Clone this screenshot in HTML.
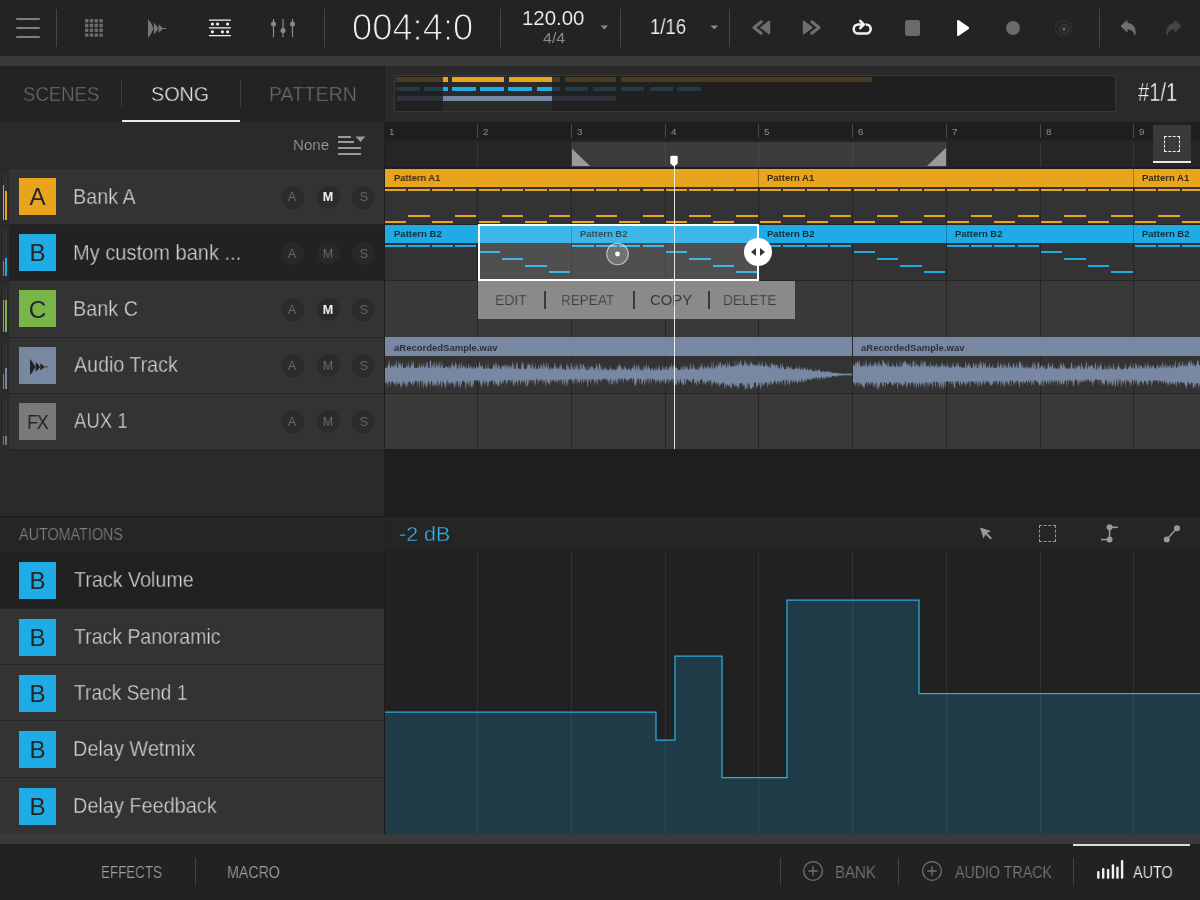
<!DOCTYPE html><html><head><meta charset="utf-8"><title>Song</title><style>
*{margin:0;padding:0;box-sizing:border-box}
html,body{width:1200px;height:900px;overflow:hidden;background:#222;font-family:"Liberation Sans",sans-serif}
.a{position:absolute}
.t{position:absolute;white-space:nowrap;line-height:1;transform-origin:0 0;will-change:transform}
</style></head><body>
<div class="a" style="left:0px;top:0px;width:1200px;height:56px;background:#232323;"></div>
<div class="a" style="left:0px;top:56px;width:1200px;height:10px;background:#3a3a3a;"></div>
<div class="a" style="left:56px;top:9px;width:1px;height:38px;background:#474747;"></div>
<div class="a" style="left:324px;top:9px;width:1px;height:38px;background:#474747;"></div>
<div class="a" style="left:500px;top:9px;width:1px;height:38px;background:#474747;"></div>
<div class="a" style="left:620px;top:9px;width:1px;height:38px;background:#474747;"></div>
<div class="a" style="left:729px;top:9px;width:1px;height:38px;background:#474747;"></div>
<div class="a" style="left:1099px;top:9px;width:1px;height:38px;background:#474747;"></div>
<div class="a" style="left:16px;top:18.2px;width:24px;height:2px;background:#7e7e7e;border-radius:1px"></div>
<div class="a" style="left:16px;top:27px;width:24px;height:2px;background:#7e7e7e;border-radius:1px"></div>
<div class="a" style="left:16px;top:35.8px;width:24px;height:2px;background:#7e7e7e;border-radius:1px"></div>
<svg class="a" style="left:0;top:0" width="340" height="56"><rect x="85.00" y="19.00" width="3.4" height="3.4" rx="0.4" fill="#6c6c6c"/><rect x="85.00" y="23.80" width="3.4" height="3.4" rx="0.4" fill="#6c6c6c"/><rect x="85.00" y="28.60" width="3.4" height="3.4" rx="0.4" fill="#6c6c6c"/><rect x="85.00" y="33.40" width="3.4" height="3.4" rx="0.4" fill="#6c6c6c"/><rect x="89.80" y="19.00" width="3.4" height="3.4" rx="0.4" fill="#6c6c6c"/><rect x="89.80" y="23.80" width="3.4" height="3.4" rx="0.4" fill="#6c6c6c"/><rect x="89.80" y="28.60" width="3.4" height="3.4" rx="0.4" fill="#6c6c6c"/><rect x="89.80" y="33.40" width="3.4" height="3.4" rx="0.4" fill="#6c6c6c"/><rect x="94.60" y="19.00" width="3.4" height="3.4" rx="0.4" fill="#6c6c6c"/><rect x="94.60" y="23.80" width="3.4" height="3.4" rx="0.4" fill="#6c6c6c"/><rect x="94.60" y="28.60" width="3.4" height="3.4" rx="0.4" fill="#6c6c6c"/><rect x="94.60" y="33.40" width="3.4" height="3.4" rx="0.4" fill="#6c6c6c"/><rect x="99.40" y="19.00" width="3.4" height="3.4" rx="0.4" fill="#6c6c6c"/><rect x="99.40" y="23.80" width="3.4" height="3.4" rx="0.4" fill="#6c6c6c"/><rect x="99.40" y="28.60" width="3.4" height="3.4" rx="0.4" fill="#6c6c6c"/><rect x="99.40" y="33.40" width="3.4" height="3.4" rx="0.4" fill="#6c6c6c"/><g transform="translate(148,28.5) scale(1,1)"><path d="M0 -9.4 Q3.2 -6 5.6 0 Q3.2 6 0 9.4Z M5.9 -5.7 Q8.6 -3.2 10.5 0 Q8.6 3.2 5.9 5.7Z M10.7 -4.2 Q13 -2.2 15.2 0 Q13 2.2 10.7 4.2Z M14 -0.55 L18.5 -0.55 L18.5 0.55 L14 0.55Z" fill="#767676"/></g><g fill="#f2f2f2"><rect x="208.8" y="19.4" width="22.2" height="1.3" rx="0.6"/><rect x="208.8" y="27.3" width="22.2" height="1.3" rx="0.6"/><rect x="208.8" y="35" width="22.2" height="1.3" rx="0.6"/><circle cx="212.4" cy="24" r="1.6"/><circle cx="217.6" cy="24" r="1.6"/><circle cx="227.6" cy="24" r="1.6"/><circle cx="212.4" cy="31.8" r="1.6"/><circle cx="222.4" cy="31.8" r="1.6"/><circle cx="227.6" cy="31.8" r="1.6"/></g><g fill="#8a8a8a"><rect x="272.9" y="19" width="1.2" height="18.3"/><rect x="282.4" y="19" width="1.2" height="18.3"/><rect x="291.9" y="19" width="1.2" height="18.3"/><circle cx="273.5" cy="24" r="2.5"/><circle cx="283" cy="30.5" r="2.5"/><circle cx="292.5" cy="24" r="2.5"/></g></svg>
<div class="t" style="left:352.00px;top:9.77px;font-size:36.30px;color:#ededed;font-weight:normal;transform:scaleX(1.0009);-webkit-text-stroke:1.1px #232323;">004:4:0</div>
<div class="t" style="left:521.80px;top:9.36px;font-size:19.74px;color:#f0f0f0;font-weight:normal;transform:scaleX(1.0350);-webkit-text-stroke:0.15px #232323;">120.00</div>
<div class="t" style="left:543.00px;top:30.70px;font-size:14.53px;color:#8a8a8a;font-weight:normal;transform:scaleX(1.1000);">4/4</div>
<svg class="a" style="left:600px;top:25px" width="9" height="5"><path d="M0.5 0.5 L8 0.5 L4.25 4.5Z" fill="#8a8a8a"/></svg>
<div class="t" style="left:650.00px;top:15.70px;font-size:21.70px;color:#f0f0f0;font-weight:normal;transform:scaleX(0.8544);-webkit-text-stroke:0.15px #232323;">1/16</div>
<svg class="a" style="left:710px;top:25px" width="9" height="5"><path d="M0.5 0.5 L8 0.5 L4.25 4.5Z" fill="#8a8a8a"/></svg>
<svg class="a" style="left:740px;top:0" width="140" height="56" viewBox="740 0 140 56"><path d="M761.2 21.8 L754 27.5 L761.2 33.2" fill="none" stroke="#6e6e6e" stroke-width="3" stroke-linecap="round" stroke-linejoin="round"/><path d="M769.6 21 L769.6 34 L760.8 27.5Z" fill="#6e6e6e" stroke="#6e6e6e" stroke-width="1.2" stroke-linejoin="round"/><path d="M811.8 21.8 L819 27.5 L811.8 33.2" fill="none" stroke="#6e6e6e" stroke-width="3" stroke-linecap="round" stroke-linejoin="round"/><path d="M803.4 21 L803.4 34 L812.2 27.5Z" fill="#6e6e6e" stroke="#6e6e6e" stroke-width="1.2" stroke-linejoin="round"/><path d="M865.6 24.4 L866.1 24.4 A4.6 4.6 0 0 1 866.1 33.6 L858.3 33.6 A4.6 4.6 0 0 1 858.3 24.4 L863 24.4" fill="none" stroke="#f4f4f4" stroke-width="2.5"/><path d="M860.2 20.9 L863.8 24.5 L860.2 28.1" fill="none" stroke="#f4f4f4" stroke-width="2.5" stroke-linecap="round" stroke-linejoin="round"/></svg>
<div class="a" style="left:905px;top:20px;width:15px;height:16px;background:#6a6a6a;border-radius:2.5px"></div>
<svg class="a" style="left:955px;top:18px" width="16" height="20" viewBox="0 0 16 20"><path d="M3.2 3.2 L13 10 L3.2 16.8Z" fill="#fff" stroke="#fff" stroke-width="2.2" stroke-linejoin="round"/></svg>
<div class="a" style="left:1006px;top:21px;width:14px;height:14px;background:#6a6a6a;border-radius:50%"></div>
<div class="a" style="left:1055.2px;top:19.7px;width:17px;height:17px;background:transparent;border-radius:50%;border:1px solid #383838"></div>
<div class="a" style="left:1059px;top:23.5px;width:10px;height:10px;background:transparent;border-radius:50%;border:1px solid #474747"></div>
<div class="a" style="left:1062px;top:26.5px;width:4px;height:4px;background:#555;border-radius:50%"></div>
<svg class="a" style="left:1119px;top:18px" width="20" height="20" viewBox="0 0 20 20"><path d="M2 8 L8 2.5 L8 5.5 C13 5.5 17 8 16 17 C14.5 12.5 12 11 8 11 L8 14Z" fill="#6e6e6e" stroke="#6e6e6e" stroke-width="1" stroke-linejoin="round"/></svg>
<svg class="a" style="left:1163px;top:18px" width="20" height="20" viewBox="0 0 20 20"><path d="M18 8 L12 2.5 L12 5.5 C7 5.5 3 8 4 17 C5.5 12.5 8 11 12 11 L12 14Z" fill="#444" stroke="#444" stroke-width="1" stroke-linejoin="round"/></svg>
<div class="a" style="left:0px;top:66px;width:384px;height:56px;background:#232323;"></div>
<div class="a" style="left:0px;top:122px;width:384px;height:395px;background:#2a2a2a;"></div>
<div class="t" style="left:23.00px;top:83.58px;font-size:20.82px;color:#707070;font-weight:normal;transform:scaleX(0.8909);-webkit-text-stroke:0.45px #232323;">SCENES</div>
<div class="t" style="left:151.00px;top:83.58px;font-size:20.82px;color:#f4f4f4;font-weight:normal;transform:scaleX(0.9495);-webkit-text-stroke:0.45px #232323;">SONG</div>
<div class="t" style="left:269.00px;top:83.58px;font-size:20.82px;color:#707070;font-weight:normal;transform:scaleX(0.9334);-webkit-text-stroke:0.45px #232323;">PATTERN</div>
<div class="a" style="left:121px;top:80px;width:1px;height:27px;background:#3e3e3e;"></div>
<div class="a" style="left:240px;top:80px;width:1px;height:27px;background:#3e3e3e;"></div>
<div class="a" style="left:122px;top:120px;width:118px;height:2px;background:#e8e8e8;"></div>
<div class="t" style="left:292.75px;top:137.15px;font-size:15.06px;color:#a0a0a0;font-weight:normal;transform:scaleX(1.0013);-webkit-text-stroke:0.2px #2a2a2a;">None</div>
<div class="a" style="left:338px;top:136px;width:13px;height:2px;background:#999;"></div>
<div class="a" style="left:338px;top:141px;width:16px;height:2px;background:#999;"></div>
<div class="a" style="left:338px;top:147px;width:23px;height:2px;background:#999;"></div>
<div class="a" style="left:338px;top:153px;width:23px;height:2px;background:#999;"></div>
<svg class="a" style="left:355px;top:136px" width="11" height="7"><path d="M0.5 0.5 L10.5 0.5 L5.5 6Z" fill="#999"/></svg>
<div class="a" style="left:9px;top:169.0px;width:375px;height:55.2px;background:#333;"></div>
<div class="a" style="left:9px;top:224.2px;width:375px;height:1px;background:#262626;"></div>
<div class="a" style="left:3px;top:174.0px;width:1.4px;height:46px;background:#353535;"></div>
<div class="a" style="left:3px;top:185px;width:1.4px;height:35.0px;background:#e9a41d;"></div>
<div class="a" style="left:5.3px;top:174.0px;width:1.4px;height:46px;background:#353535;"></div>
<div class="a" style="left:5.3px;top:191px;width:1.4px;height:29.0px;background:#e9a41d;"></div>
<div class="a" style="left:19px;top:178.0px;width:37px;height:37px;background:#e9a41d;"></div>
<div class="t" style="left:19px;width:37px;text-align:center;top:185.15px;font-size:24.16px;color:#262626">A</div>
<div class="t" style="left:73.00px;top:186.55px;font-size:21.39px;color:#d6d6d6;font-weight:normal;transform:scaleX(0.9250);-webkit-text-stroke:0.35px #333;">Bank A</div>
<div class="a" style="left:280.5px;top:185.5px;width:23px;height:23px;background:#2b2b2b;border-radius:50%"></div>
<div class="t" style="left:277px;width:30px;text-align:center;top:191.36px;font-size:12.57px;color:#666">A</div>
<div class="a" style="left:316.5px;top:185.5px;width:23px;height:23px;background:#2b2b2b;border-radius:50%"></div>
<div class="t" style="left:313px;width:30px;text-align:center;top:191.36px;font-size:12.57px;color:#f2f2f2;font-weight:bold">M</div>
<div class="a" style="left:352.0px;top:185.5px;width:23px;height:23px;background:#2b2b2b;border-radius:50%"></div>
<div class="t" style="left:348.5px;width:30px;text-align:center;top:191.36px;font-size:12.57px;color:#666">S</div>
<div class="a" style="left:9px;top:225.2px;width:375px;height:55.2px;background:#222;"></div>
<div class="a" style="left:9px;top:280.4px;width:375px;height:1px;background:#262626;"></div>
<div class="a" style="left:3px;top:230.2px;width:1.4px;height:46px;background:#353535;"></div>
<div class="a" style="left:3px;top:261px;width:1.4px;height:15.199999999999989px;background:#1eabe6;"></div>
<div class="a" style="left:5.3px;top:230.2px;width:1.4px;height:46px;background:#353535;"></div>
<div class="a" style="left:5.3px;top:258px;width:1.4px;height:18.19999999999999px;background:#1eabe6;"></div>
<div class="a" style="left:19px;top:234.2px;width:37px;height:37px;background:#1eabe6;"></div>
<div class="t" style="left:19px;width:37px;text-align:center;top:241.35px;font-size:24.16px;color:#262626">B</div>
<div class="t" style="left:73.00px;top:242.75px;font-size:21.39px;color:#d6d6d6;font-weight:normal;transform:scaleX(0.9376);-webkit-text-stroke:0.35px #222;">My custom bank ...</div>
<div class="a" style="left:280.5px;top:241.7px;width:23px;height:23px;background:#282828;border-radius:50%"></div>
<div class="t" style="left:277px;width:30px;text-align:center;top:247.56px;font-size:12.57px;color:#666">A</div>
<div class="a" style="left:316.5px;top:241.7px;width:23px;height:23px;background:#282828;border-radius:50%"></div>
<div class="t" style="left:313px;width:30px;text-align:center;top:247.56px;font-size:12.57px;color:#666">M</div>
<div class="a" style="left:352.0px;top:241.7px;width:23px;height:23px;background:#282828;border-radius:50%"></div>
<div class="t" style="left:348.5px;width:30px;text-align:center;top:247.56px;font-size:12.57px;color:#666">S</div>
<div class="a" style="left:9px;top:281.4px;width:375px;height:55.2px;background:#333;"></div>
<div class="a" style="left:9px;top:336.59999999999997px;width:375px;height:1px;background:#262626;"></div>
<div class="a" style="left:3px;top:286.4px;width:1.4px;height:46px;background:#353535;"></div>
<div class="a" style="left:3px;top:300px;width:1.4px;height:32.39999999999998px;background:#79b548;"></div>
<div class="a" style="left:5.3px;top:286.4px;width:1.4px;height:46px;background:#353535;"></div>
<div class="a" style="left:5.3px;top:300px;width:1.4px;height:32.39999999999998px;background:#79b548;"></div>
<div class="a" style="left:19px;top:290.4px;width:37px;height:37px;background:#79b548;"></div>
<div class="t" style="left:19px;width:37px;text-align:center;top:297.55px;font-size:24.16px;color:#262626">C</div>
<div class="t" style="left:73.00px;top:298.95px;font-size:21.39px;color:#d6d6d6;font-weight:normal;transform:scaleX(0.9261);-webkit-text-stroke:0.35px #333;">Bank C</div>
<div class="a" style="left:280.5px;top:297.9px;width:23px;height:23px;background:#2b2b2b;border-radius:50%"></div>
<div class="t" style="left:277px;width:30px;text-align:center;top:303.76px;font-size:12.57px;color:#666">A</div>
<div class="a" style="left:316.5px;top:297.9px;width:23px;height:23px;background:#2b2b2b;border-radius:50%"></div>
<div class="t" style="left:313px;width:30px;text-align:center;top:303.76px;font-size:12.57px;color:#f2f2f2;font-weight:bold">M</div>
<div class="a" style="left:352.0px;top:297.9px;width:23px;height:23px;background:#2b2b2b;border-radius:50%"></div>
<div class="t" style="left:348.5px;width:30px;text-align:center;top:303.76px;font-size:12.57px;color:#666">S</div>
<div class="a" style="left:9px;top:337.6px;width:375px;height:55.2px;background:#333;"></div>
<div class="a" style="left:9px;top:392.8px;width:375px;height:1px;background:#262626;"></div>
<div class="a" style="left:3px;top:342.6px;width:1.4px;height:46px;background:#353535;"></div>
<div class="a" style="left:3px;top:374px;width:1.4px;height:14.600000000000023px;background:#7888a2;"></div>
<div class="a" style="left:5.3px;top:342.6px;width:1.4px;height:46px;background:#353535;"></div>
<div class="a" style="left:5.3px;top:368px;width:1.4px;height:20.600000000000023px;background:#7888a2;"></div>
<div class="a" style="left:19px;top:346.6px;width:37px;height:37px;background:#7888a2;"></div>
<svg class="a" style="left:0;top:0" width="60" height="450"><g transform="translate(30,366.90000000000003) scale(0.96,0.85)"><path d="M0 -9.4 Q3.2 -6 5.6 0 Q3.2 6 0 9.4Z M5.9 -5.7 Q8.6 -3.2 10.5 0 Q8.6 3.2 5.9 5.7Z M10.7 -4.2 Q13 -2.2 15.2 0 Q13 2.2 10.7 4.2Z M14 -0.55 L18.5 -0.55 L18.5 0.55 L14 0.55Z" fill="#222"/></g></svg>
<div class="t" style="left:74.00px;top:355.15px;font-size:21.39px;color:#d6d6d6;font-weight:normal;transform:scaleX(0.9195);-webkit-text-stroke:0.35px #333;">Audio Track</div>
<div class="a" style="left:280.5px;top:354.1px;width:23px;height:23px;background:#2b2b2b;border-radius:50%"></div>
<div class="t" style="left:277px;width:30px;text-align:center;top:359.96px;font-size:12.57px;color:#666">A</div>
<div class="a" style="left:316.5px;top:354.1px;width:23px;height:23px;background:#2b2b2b;border-radius:50%"></div>
<div class="t" style="left:313px;width:30px;text-align:center;top:359.96px;font-size:12.57px;color:#666">M</div>
<div class="a" style="left:352.0px;top:354.1px;width:23px;height:23px;background:#2b2b2b;border-radius:50%"></div>
<div class="t" style="left:348.5px;width:30px;text-align:center;top:359.96px;font-size:12.57px;color:#666">S</div>
<div class="a" style="left:9px;top:393.8px;width:375px;height:55.2px;background:#333;"></div>
<div class="a" style="left:9px;top:449.0px;width:375px;height:1px;background:#262626;"></div>
<div class="a" style="left:3px;top:398.8px;width:1.4px;height:46px;background:#353535;"></div>
<div class="a" style="left:3px;top:436px;width:1.4px;height:8.800000000000011px;background:#7a7a7a;"></div>
<div class="a" style="left:5.3px;top:398.8px;width:1.4px;height:46px;background:#353535;"></div>
<div class="a" style="left:5.3px;top:436px;width:1.4px;height:8.800000000000011px;background:#7a7a7a;"></div>
<div class="a" style="left:19px;top:402.8px;width:37px;height:37px;background:#7a7a7a;"></div>
<div class="t" style="left:27.00px;top:413.39px;font-size:19.97px;color:#262626;font-weight:normal;transform:scaleX(1.0000);letter-spacing:-1.5px;transform:scaleX(0.9)">FX</div>
<div class="t" style="left:74.00px;top:411.35px;font-size:21.39px;color:#d6d6d6;font-weight:normal;transform:scaleX(0.8676);-webkit-text-stroke:0.35px #333;">AUX 1</div>
<div class="a" style="left:280.5px;top:410.3px;width:23px;height:23px;background:#2b2b2b;border-radius:50%"></div>
<div class="t" style="left:277px;width:30px;text-align:center;top:416.16px;font-size:12.57px;color:#666">A</div>
<div class="a" style="left:316.5px;top:410.3px;width:23px;height:23px;background:#2b2b2b;border-radius:50%"></div>
<div class="t" style="left:313px;width:30px;text-align:center;top:416.16px;font-size:12.57px;color:#666">M</div>
<div class="a" style="left:352.0px;top:410.3px;width:23px;height:23px;background:#2b2b2b;border-radius:50%"></div>
<div class="t" style="left:348.5px;width:30px;text-align:center;top:416.16px;font-size:12.57px;color:#666">S</div>
<div class="a" style="left:0px;top:516px;width:1200px;height:1px;background:#1c1c1c;"></div>
<div class="a" style="left:0px;top:517px;width:384px;height:35px;background:#252525;"></div>
<div class="t" style="left:19.00px;top:526.87px;font-size:15.61px;color:#808080;font-weight:normal;transform:scaleX(0.9195);-webkit-text-stroke:0.2px #252525;">AUTOMATIONS</div>
<div class="a" style="left:0px;top:552px;width:384px;height:57px;background:#212121;"></div>
<div class="a" style="left:19px;top:562px;width:37px;height:37px;background:#1eabe6;"></div>
<div class="t" style="left:19px;width:37px;text-align:center;top:569.15px;font-size:24.16px;color:#262626">B</div>
<div class="t" style="left:74.00px;top:570.05px;font-size:21.39px;color:#d6d6d6;font-weight:normal;transform:scaleX(0.9220);-webkit-text-stroke:0.35px #212121;">Track Volume</div>
<div class="a" style="left:0px;top:609px;width:384px;height:56px;background:#333;"></div>
<div class="a" style="left:0px;top:608px;width:384px;height:1px;background:#262626;"></div>
<div class="a" style="left:19px;top:619px;width:37px;height:37px;background:#1eabe6;"></div>
<div class="t" style="left:19px;width:37px;text-align:center;top:626.15px;font-size:24.16px;color:#262626">B</div>
<div class="t" style="left:74.00px;top:627.05px;font-size:21.39px;color:#d6d6d6;font-weight:normal;transform:scaleX(0.9116);-webkit-text-stroke:0.35px #333;">Track Panoramic</div>
<div class="a" style="left:0px;top:665px;width:384px;height:56px;background:#333;"></div>
<div class="a" style="left:0px;top:664px;width:384px;height:1px;background:#262626;"></div>
<div class="a" style="left:19px;top:675px;width:37px;height:37px;background:#1eabe6;"></div>
<div class="t" style="left:19px;width:37px;text-align:center;top:682.15px;font-size:24.16px;color:#262626">B</div>
<div class="t" style="left:74.00px;top:683.05px;font-size:21.39px;color:#d6d6d6;font-weight:normal;transform:scaleX(0.8982);-webkit-text-stroke:0.35px #333;">Track Send 1</div>
<div class="a" style="left:0px;top:721px;width:384px;height:57px;background:#333;"></div>
<div class="a" style="left:0px;top:720px;width:384px;height:1px;background:#262626;"></div>
<div class="a" style="left:19px;top:731px;width:37px;height:37px;background:#1eabe6;"></div>
<div class="t" style="left:19px;width:37px;text-align:center;top:738.15px;font-size:24.16px;color:#262626">B</div>
<div class="t" style="left:73.00px;top:739.05px;font-size:21.39px;color:#d6d6d6;font-weight:normal;transform:scaleX(0.9304);-webkit-text-stroke:0.35px #333;">Delay Wetmix</div>
<div class="a" style="left:0px;top:778px;width:384px;height:56px;background:#333;"></div>
<div class="a" style="left:0px;top:777px;width:384px;height:1px;background:#262626;"></div>
<div class="a" style="left:19px;top:788px;width:37px;height:37px;background:#1eabe6;"></div>
<div class="t" style="left:19px;width:37px;text-align:center;top:795.15px;font-size:24.16px;color:#262626">B</div>
<div class="t" style="left:73.00px;top:796.05px;font-size:21.39px;color:#d6d6d6;font-weight:normal;transform:scaleX(0.9303);-webkit-text-stroke:0.35px #333;">Delay Feedback</div>
<div class="a" style="left:384px;top:66px;width:816px;height:56px;background:#2a2a2a;"></div>
<div class="a" style="left:384px;top:66px;width:1px;height:451px;background:#1e1e1e;"></div>
<div class="a" style="left:394px;top:75px;width:722px;height:37px;background:#202020;border:1px solid #383838"></div>
<div class="a" style="left:443px;top:76px;width:109px;height:35px;background:#2a2a2a;"></div>
<div class="a" style="left:396px;top:77px;width:47px;height:5px;background:#4a3a1e;"></div>
<div class="a" style="left:443px;top:77px;width:5px;height:5px;background:#e9a41d;"></div>
<div class="a" style="left:452px;top:77px;width:52px;height:5px;background:#e9a41d;"></div>
<div class="a" style="left:509px;top:77px;width:43px;height:5px;background:#e9a41d;"></div>
<div class="a" style="left:552px;top:77px;width:8px;height:5px;background:#4a3a1e;"></div>
<div class="a" style="left:565px;top:77px;width:51px;height:5px;background:#4a3a1e;"></div>
<div class="a" style="left:621px;top:77px;width:251px;height:5px;background:#4a3a1e;"></div>
<div class="a" style="left:396px;top:87px;width:24px;height:4px;background:#1f3b48;"></div>
<div class="a" style="left:424px;top:87px;width:19px;height:4px;background:#1f3b48;"></div>
<div class="a" style="left:443px;top:87px;width:5px;height:4px;background:#1eabe6;"></div>
<div class="a" style="left:452px;top:87px;width:24px;height:4px;background:#1eabe6;"></div>
<div class="a" style="left:480px;top:87px;width:24px;height:4px;background:#1eabe6;"></div>
<div class="a" style="left:508px;top:87px;width:24px;height:4px;background:#1eabe6;"></div>
<div class="a" style="left:537px;top:87px;width:15px;height:4px;background:#1eabe6;"></div>
<div class="a" style="left:552px;top:87px;width:8px;height:4px;background:#1f3b48;"></div>
<div class="a" style="left:565px;top:87px;width:23px;height:4px;background:#1f3b48;"></div>
<div class="a" style="left:593px;top:87px;width:23px;height:4px;background:#1f3b48;"></div>
<div class="a" style="left:621px;top:87px;width:23px;height:4px;background:#1f3b48;"></div>
<div class="a" style="left:650px;top:87px;width:23px;height:4px;background:#1f3b48;"></div>
<div class="a" style="left:677px;top:87px;width:24px;height:4px;background:#1f3b48;"></div>
<div class="a" style="left:397px;top:96px;width:46px;height:5px;background:#2f3238;"></div>
<div class="a" style="left:443px;top:96px;width:109px;height:5px;background:#7888a2;"></div>
<div class="a" style="left:552px;top:96px;width:64px;height:5px;background:#2f3238;"></div>
<div class="t" style="left:1137.50px;top:80.29px;font-size:25.52px;color:#f0f0f0;font-weight:normal;transform:scaleX(0.7871);-webkit-text-stroke:0.3px #2a2a2a;">#1/1</div>
<div class="a" style="left:385px;top:122px;width:815px;height:18px;background:#1f1f1f;"></div>
<div class="a" style="left:385px;top:140px;width:815px;height:27px;background:#252525;"></div>
<div class="a" style="left:385px;top:167px;width:815px;height:2px;background:#1d1d1d;"></div>
<div class="a" style="left:571px;top:142px;width:375px;height:25px;background:#3b3b3b;"></div>
<svg class="a" style="left:571px;top:147px" width="20" height="20"><path d="M0 0.7 L0 19 L19 19Z" fill="#9a9a9a"/></svg>
<svg class="a" style="left:926px;top:147px" width="20" height="20"><path d="M20 0.7 L20 19 L1 19Z" fill="#9a9a9a"/></svg>
<div class="t" style="left:388.5px;top:126.72px;font-size:9.78px;color:#8e8e8e">1</div>
<div class="a" style="left:477px;top:124px;width:1px;height:14px;background:#4a4a4a;"></div>
<div class="a" style="left:477px;top:143px;width:1px;height:23px;background:#383838;"></div>
<div class="t" style="left:482.5px;top:126.72px;font-size:9.78px;color:#8e8e8e">2</div>
<div class="a" style="left:571px;top:124px;width:1px;height:14px;background:#4a4a4a;"></div>
<div class="a" style="left:571px;top:143px;width:1px;height:23px;background:#383838;"></div>
<div class="t" style="left:576.5px;top:126.72px;font-size:9.78px;color:#8e8e8e">3</div>
<div class="a" style="left:665px;top:124px;width:1px;height:14px;background:#4a4a4a;"></div>
<div class="a" style="left:665px;top:143px;width:1px;height:23px;background:#474747;"></div>
<div class="t" style="left:670.5px;top:126.72px;font-size:9.78px;color:#8e8e8e">4</div>
<div class="a" style="left:758px;top:124px;width:1px;height:14px;background:#4a4a4a;"></div>
<div class="a" style="left:758px;top:143px;width:1px;height:23px;background:#474747;"></div>
<div class="t" style="left:763.5px;top:126.72px;font-size:9.78px;color:#8e8e8e">5</div>
<div class="a" style="left:852px;top:124px;width:1px;height:14px;background:#4a4a4a;"></div>
<div class="a" style="left:852px;top:143px;width:1px;height:23px;background:#474747;"></div>
<div class="t" style="left:857.5px;top:126.72px;font-size:9.78px;color:#8e8e8e">6</div>
<div class="a" style="left:946px;top:124px;width:1px;height:14px;background:#4a4a4a;"></div>
<div class="a" style="left:946px;top:143px;width:1px;height:23px;background:#383838;"></div>
<div class="t" style="left:951.5px;top:126.72px;font-size:9.78px;color:#8e8e8e">7</div>
<div class="a" style="left:1040px;top:124px;width:1px;height:14px;background:#4a4a4a;"></div>
<div class="a" style="left:1040px;top:143px;width:1px;height:23px;background:#383838;"></div>
<div class="t" style="left:1045.5px;top:126.72px;font-size:9.78px;color:#8e8e8e">8</div>
<div class="a" style="left:1133px;top:124px;width:1px;height:14px;background:#4a4a4a;"></div>
<div class="a" style="left:1133px;top:143px;width:1px;height:23px;background:#383838;"></div>
<div class="t" style="left:1138.5px;top:126.72px;font-size:9.78px;color:#8e8e8e">9</div>
<div class="a" style="left:1153px;top:125px;width:38px;height:38px;background:#3a3a3a;"></div>
<div class="a" style="left:1153px;top:161px;width:38px;height:2px;background:#e8e8e8;"></div>
<div class="a" style="left:1164px;top:136px;width:16px;height:16px;background:transparent;border:1.5px dashed #eee"></div>
<div class="a" style="left:384px;top:169.0px;width:816px;height:55.2px;background:#333;"></div>
<div class="a" style="left:384px;top:224.2px;width:816px;height:1px;background:#262626;"></div>
<div class="a" style="left:384px;top:225.2px;width:816px;height:55.2px;background:#333;"></div>
<div class="a" style="left:384px;top:280.4px;width:816px;height:1px;background:#262626;"></div>
<div class="a" style="left:384px;top:281.4px;width:816px;height:55.2px;background:#3a3a3a;"></div>
<div class="a" style="left:384px;top:336.59999999999997px;width:816px;height:1px;background:#262626;"></div>
<div class="a" style="left:384px;top:337.6px;width:816px;height:55.2px;background:#333;"></div>
<div class="a" style="left:384px;top:392.8px;width:816px;height:1px;background:#262626;"></div>
<div class="a" style="left:384px;top:393.8px;width:816px;height:55.2px;background:#3a3a3a;"></div>
<div class="a" style="left:384px;top:449.0px;width:816px;height:1px;background:#262626;"></div>
<div class="a" style="left:477px;top:169px;width:1px;height:280px;background:#262626;"></div>
<div class="a" style="left:571px;top:169px;width:1px;height:280px;background:#262626;"></div>
<div class="a" style="left:665px;top:169px;width:1px;height:280px;background:#262626;"></div>
<div class="a" style="left:758px;top:169px;width:1px;height:280px;background:#262626;"></div>
<div class="a" style="left:852px;top:169px;width:1px;height:280px;background:#262626;"></div>
<div class="a" style="left:946px;top:169px;width:1px;height:280px;background:#262626;"></div>
<div class="a" style="left:1040px;top:169px;width:1px;height:280px;background:#262626;"></div>
<div class="a" style="left:1133px;top:169px;width:1px;height:280px;background:#262626;"></div>
<div class="a" style="left:384px;top:449px;width:816px;height:67px;background:#1e1e1e;"></div>
<div class="a" style="left:385px;top:169px;width:373px;height:18px;background:#e9a41d;"></div>
<div class="t" style="left:393.50px;top:172.96px;font-size:9.50px;color:#3a2a10;font-weight:bold;transform:scaleX(0.9794);">Pattern A1</div>
<div class="a" style="left:758px;top:169px;width:375px;height:18px;background:#e9a41d;"></div>
<div class="a" style="left:758px;top:169px;width:1px;height:18px;background:#a8761a;"></div>
<div class="t" style="left:766.50px;top:172.96px;font-size:9.50px;color:#3a2a10;font-weight:bold;transform:scaleX(1.0000);">Pattern A1</div>
<div class="a" style="left:1133px;top:169px;width:67px;height:18px;background:#e9a41d;"></div>
<div class="a" style="left:1133px;top:169px;width:1px;height:18px;background:#a8761a;"></div>
<div class="t" style="left:1141.50px;top:172.96px;font-size:9.50px;color:#3a2a10;font-weight:bold;transform:scaleX(1.0000);">Pattern A1</div>
<div class="a" style="left:384.75px;top:189px;width:21.34px;height:2.4px;background:#e9a41d;"></div>
<div class="a" style="left:384.75px;top:221px;width:21.34px;height:2px;background:#e9a41d;"></div>
<div class="a" style="left:408.19px;top:189px;width:21.34px;height:2.4px;background:#e9a41d;"></div>
<div class="a" style="left:408.19px;top:215px;width:21.34px;height:2px;background:#e9a41d;"></div>
<div class="a" style="left:431.62px;top:189px;width:21.34px;height:2.4px;background:#e9a41d;"></div>
<div class="a" style="left:431.62px;top:221px;width:21.34px;height:2px;background:#e9a41d;"></div>
<div class="a" style="left:455.06px;top:189px;width:21.34px;height:2.4px;background:#e9a41d;"></div>
<div class="a" style="left:455.06px;top:215px;width:21.34px;height:2px;background:#e9a41d;"></div>
<div class="a" style="left:478.50px;top:189px;width:21.34px;height:2.4px;background:#e9a41d;"></div>
<div class="a" style="left:478.50px;top:221px;width:21.34px;height:2px;background:#e9a41d;"></div>
<div class="a" style="left:501.94px;top:189px;width:21.34px;height:2.4px;background:#e9a41d;"></div>
<div class="a" style="left:501.94px;top:215px;width:21.34px;height:2px;background:#e9a41d;"></div>
<div class="a" style="left:525.38px;top:189px;width:21.34px;height:2.4px;background:#e9a41d;"></div>
<div class="a" style="left:525.38px;top:221px;width:21.34px;height:2px;background:#e9a41d;"></div>
<div class="a" style="left:548.81px;top:189px;width:21.34px;height:2.4px;background:#e9a41d;"></div>
<div class="a" style="left:548.81px;top:215px;width:21.34px;height:2px;background:#e9a41d;"></div>
<div class="a" style="left:572.25px;top:189px;width:21.34px;height:2.4px;background:#e9a41d;"></div>
<div class="a" style="left:572.25px;top:221px;width:21.34px;height:2px;background:#e9a41d;"></div>
<div class="a" style="left:595.69px;top:189px;width:21.34px;height:2.4px;background:#e9a41d;"></div>
<div class="a" style="left:595.69px;top:215px;width:21.34px;height:2px;background:#e9a41d;"></div>
<div class="a" style="left:619.12px;top:189px;width:21.34px;height:2.4px;background:#e9a41d;"></div>
<div class="a" style="left:619.12px;top:221px;width:21.34px;height:2px;background:#e9a41d;"></div>
<div class="a" style="left:642.56px;top:189px;width:21.34px;height:2.4px;background:#e9a41d;"></div>
<div class="a" style="left:642.56px;top:215px;width:21.34px;height:2px;background:#e9a41d;"></div>
<div class="a" style="left:666.00px;top:189px;width:21.34px;height:2.4px;background:#e9a41d;"></div>
<div class="a" style="left:666.00px;top:221px;width:21.34px;height:2px;background:#e9a41d;"></div>
<div class="a" style="left:689.44px;top:189px;width:21.34px;height:2.4px;background:#e9a41d;"></div>
<div class="a" style="left:689.44px;top:215px;width:21.34px;height:2px;background:#e9a41d;"></div>
<div class="a" style="left:712.88px;top:189px;width:21.34px;height:2.4px;background:#e9a41d;"></div>
<div class="a" style="left:712.88px;top:221px;width:21.34px;height:2px;background:#e9a41d;"></div>
<div class="a" style="left:736.31px;top:189px;width:21.34px;height:2.4px;background:#e9a41d;"></div>
<div class="a" style="left:736.31px;top:215px;width:21.34px;height:2px;background:#e9a41d;"></div>
<div class="a" style="left:759.75px;top:189px;width:21.34px;height:2.4px;background:#e9a41d;"></div>
<div class="a" style="left:759.75px;top:221px;width:21.34px;height:2px;background:#e9a41d;"></div>
<div class="a" style="left:783.19px;top:189px;width:21.34px;height:2.4px;background:#e9a41d;"></div>
<div class="a" style="left:783.19px;top:215px;width:21.34px;height:2px;background:#e9a41d;"></div>
<div class="a" style="left:806.62px;top:189px;width:21.34px;height:2.4px;background:#e9a41d;"></div>
<div class="a" style="left:806.62px;top:221px;width:21.34px;height:2px;background:#e9a41d;"></div>
<div class="a" style="left:830.06px;top:189px;width:21.34px;height:2.4px;background:#e9a41d;"></div>
<div class="a" style="left:830.06px;top:215px;width:21.34px;height:2px;background:#e9a41d;"></div>
<div class="a" style="left:853.50px;top:189px;width:21.34px;height:2.4px;background:#e9a41d;"></div>
<div class="a" style="left:853.50px;top:221px;width:21.34px;height:2px;background:#e9a41d;"></div>
<div class="a" style="left:876.94px;top:189px;width:21.34px;height:2.4px;background:#e9a41d;"></div>
<div class="a" style="left:876.94px;top:215px;width:21.34px;height:2px;background:#e9a41d;"></div>
<div class="a" style="left:900.38px;top:189px;width:21.34px;height:2.4px;background:#e9a41d;"></div>
<div class="a" style="left:900.38px;top:221px;width:21.34px;height:2px;background:#e9a41d;"></div>
<div class="a" style="left:923.81px;top:189px;width:21.34px;height:2.4px;background:#e9a41d;"></div>
<div class="a" style="left:923.81px;top:215px;width:21.34px;height:2px;background:#e9a41d;"></div>
<div class="a" style="left:947.25px;top:189px;width:21.34px;height:2.4px;background:#e9a41d;"></div>
<div class="a" style="left:947.25px;top:221px;width:21.34px;height:2px;background:#e9a41d;"></div>
<div class="a" style="left:970.69px;top:189px;width:21.34px;height:2.4px;background:#e9a41d;"></div>
<div class="a" style="left:970.69px;top:215px;width:21.34px;height:2px;background:#e9a41d;"></div>
<div class="a" style="left:994.12px;top:189px;width:21.34px;height:2.4px;background:#e9a41d;"></div>
<div class="a" style="left:994.12px;top:221px;width:21.34px;height:2px;background:#e9a41d;"></div>
<div class="a" style="left:1017.56px;top:189px;width:21.34px;height:2.4px;background:#e9a41d;"></div>
<div class="a" style="left:1017.56px;top:215px;width:21.34px;height:2px;background:#e9a41d;"></div>
<div class="a" style="left:1041.00px;top:189px;width:21.34px;height:2.4px;background:#e9a41d;"></div>
<div class="a" style="left:1041.00px;top:221px;width:21.34px;height:2px;background:#e9a41d;"></div>
<div class="a" style="left:1064.44px;top:189px;width:21.34px;height:2.4px;background:#e9a41d;"></div>
<div class="a" style="left:1064.44px;top:215px;width:21.34px;height:2px;background:#e9a41d;"></div>
<div class="a" style="left:1087.88px;top:189px;width:21.34px;height:2.4px;background:#e9a41d;"></div>
<div class="a" style="left:1087.88px;top:221px;width:21.34px;height:2px;background:#e9a41d;"></div>
<div class="a" style="left:1111.31px;top:189px;width:21.34px;height:2.4px;background:#e9a41d;"></div>
<div class="a" style="left:1111.31px;top:215px;width:21.34px;height:2px;background:#e9a41d;"></div>
<div class="a" style="left:1134.75px;top:189px;width:21.34px;height:2.4px;background:#e9a41d;"></div>
<div class="a" style="left:1134.75px;top:221px;width:21.34px;height:2px;background:#e9a41d;"></div>
<div class="a" style="left:1158.19px;top:189px;width:21.34px;height:2.4px;background:#e9a41d;"></div>
<div class="a" style="left:1158.19px;top:215px;width:21.34px;height:2px;background:#e9a41d;"></div>
<div class="a" style="left:1181.62px;top:189px;width:21.34px;height:2.4px;background:#e9a41d;"></div>
<div class="a" style="left:1181.62px;top:221px;width:21.34px;height:2px;background:#e9a41d;"></div>
<div class="a" style="left:1205.06px;top:189px;width:21.34px;height:2.4px;background:#e9a41d;"></div>
<div class="a" style="left:1205.06px;top:215px;width:21.34px;height:2px;background:#e9a41d;"></div>
<div class="a" style="left:385px;top:225px;width:186px;height:18px;background:#1eabe6;"></div>
<div class="t" style="left:393.50px;top:228.96px;font-size:9.50px;color:#10303f;font-weight:bold;transform:scaleX(1.0049);">Pattern B2</div>
<div class="a" style="left:571px;top:225px;width:187px;height:18px;background:#1eabe6;"></div>
<div class="a" style="left:571px;top:225px;width:1px;height:18px;background:#167fae;"></div>
<div class="t" style="left:579.50px;top:228.96px;font-size:9.50px;color:#10303f;font-weight:bold;transform:scaleX(1.0000);">Pattern B2</div>
<div class="a" style="left:758px;top:225px;width:188px;height:18px;background:#1eabe6;"></div>
<div class="a" style="left:758px;top:225px;width:1px;height:18px;background:#167fae;"></div>
<div class="t" style="left:766.50px;top:228.96px;font-size:9.50px;color:#10303f;font-weight:bold;transform:scaleX(1.0000);">Pattern B2</div>
<div class="a" style="left:946px;top:225px;width:187px;height:18px;background:#1eabe6;"></div>
<div class="a" style="left:946px;top:225px;width:1px;height:18px;background:#167fae;"></div>
<div class="t" style="left:954.50px;top:228.96px;font-size:9.50px;color:#10303f;font-weight:bold;transform:scaleX(1.0000);">Pattern B2</div>
<div class="a" style="left:1133px;top:225px;width:67px;height:18px;background:#1eabe6;"></div>
<div class="a" style="left:1133px;top:225px;width:1px;height:18px;background:#167fae;"></div>
<div class="t" style="left:1141.50px;top:228.96px;font-size:9.50px;color:#10303f;font-weight:bold;transform:scaleX(1.0000);">Pattern B2</div>
<div class="a" style="left:384.75px;top:245px;width:21.34px;height:2.2px;background:#1eabe6;"></div>
<div class="a" style="left:408.19px;top:245px;width:21.34px;height:2.2px;background:#1eabe6;"></div>
<div class="a" style="left:431.62px;top:245px;width:21.34px;height:2.2px;background:#1eabe6;"></div>
<div class="a" style="left:455.06px;top:245px;width:21.34px;height:2.2px;background:#1eabe6;"></div>
<div class="a" style="left:478.50px;top:251px;width:21.34px;height:2px;background:#1eabe6;"></div>
<div class="a" style="left:501.94px;top:257.6px;width:21.34px;height:2px;background:#1eabe6;"></div>
<div class="a" style="left:525.38px;top:265px;width:21.34px;height:2px;background:#1eabe6;"></div>
<div class="a" style="left:548.81px;top:270.8px;width:21.34px;height:2px;background:#1eabe6;"></div>
<div class="a" style="left:572.25px;top:245px;width:21.34px;height:2.2px;background:#1eabe6;"></div>
<div class="a" style="left:595.69px;top:245px;width:21.34px;height:2.2px;background:#1eabe6;"></div>
<div class="a" style="left:619.12px;top:245px;width:21.34px;height:2.2px;background:#1eabe6;"></div>
<div class="a" style="left:642.56px;top:245px;width:21.34px;height:2.2px;background:#1eabe6;"></div>
<div class="a" style="left:666.00px;top:251px;width:21.34px;height:2px;background:#1eabe6;"></div>
<div class="a" style="left:689.44px;top:257.6px;width:21.34px;height:2px;background:#1eabe6;"></div>
<div class="a" style="left:712.88px;top:265px;width:21.34px;height:2px;background:#1eabe6;"></div>
<div class="a" style="left:736.31px;top:270.8px;width:21.34px;height:2px;background:#1eabe6;"></div>
<div class="a" style="left:759.75px;top:245px;width:21.34px;height:2.2px;background:#1eabe6;"></div>
<div class="a" style="left:783.19px;top:245px;width:21.34px;height:2.2px;background:#1eabe6;"></div>
<div class="a" style="left:806.62px;top:245px;width:21.34px;height:2.2px;background:#1eabe6;"></div>
<div class="a" style="left:830.06px;top:245px;width:21.34px;height:2.2px;background:#1eabe6;"></div>
<div class="a" style="left:853.50px;top:251px;width:21.34px;height:2px;background:#1eabe6;"></div>
<div class="a" style="left:876.94px;top:257.6px;width:21.34px;height:2px;background:#1eabe6;"></div>
<div class="a" style="left:900.38px;top:265px;width:21.34px;height:2px;background:#1eabe6;"></div>
<div class="a" style="left:923.81px;top:270.8px;width:21.34px;height:2px;background:#1eabe6;"></div>
<div class="a" style="left:947.25px;top:245px;width:21.34px;height:2.2px;background:#1eabe6;"></div>
<div class="a" style="left:970.69px;top:245px;width:21.34px;height:2.2px;background:#1eabe6;"></div>
<div class="a" style="left:994.12px;top:245px;width:21.34px;height:2.2px;background:#1eabe6;"></div>
<div class="a" style="left:1017.56px;top:245px;width:21.34px;height:2.2px;background:#1eabe6;"></div>
<div class="a" style="left:1041.00px;top:251px;width:21.34px;height:2px;background:#1eabe6;"></div>
<div class="a" style="left:1064.44px;top:257.6px;width:21.34px;height:2px;background:#1eabe6;"></div>
<div class="a" style="left:1087.88px;top:265px;width:21.34px;height:2px;background:#1eabe6;"></div>
<div class="a" style="left:1111.31px;top:270.8px;width:21.34px;height:2px;background:#1eabe6;"></div>
<div class="a" style="left:1134.75px;top:245px;width:21.34px;height:2.2px;background:#1eabe6;"></div>
<div class="a" style="left:1158.19px;top:245px;width:21.34px;height:2.2px;background:#1eabe6;"></div>
<div class="a" style="left:1181.62px;top:245px;width:21.34px;height:2.2px;background:#1eabe6;"></div>
<div class="a" style="left:1205.06px;top:245px;width:21.34px;height:2.2px;background:#1eabe6;"></div>
<div class="a" style="left:478px;top:243px;width:281px;height:37px;background:rgba(255,255,255,0.14);"></div>
<div class="a" style="left:478px;top:225px;width:281px;height:18px;background:rgba(255,255,255,0.14);"></div>
<div class="a" style="left:478px;top:224px;width:281px;height:57px;background:transparent;border:2px solid #fff"></div>
<svg class="a" style="left:600px;top:236px" width="36" height="36"><circle cx="17.5" cy="18" r="10.8" fill="rgba(255,255,255,0.2)" stroke="rgba(255,255,255,0.6)" stroke-width="1.1"/><circle cx="17.5" cy="18" r="2.4" fill="#fff"/></svg>
<div class="a" style="left:744px;top:238px;width:28px;height:28px;background:#fff;border-radius:50%"></div>
<svg class="a" style="left:750px;top:247px" width="16" height="10"><path d="M1 5 L6 1 L6 9Z M15 5 L10 1 L10 9Z" fill="#333"/></svg>
<div class="a" style="left:385px;top:337px;width:815px;height:19px;background:#7888a2;"></div>
<div class="a" style="left:852px;top:337px;width:1px;height:56px;background:#2a2a2a;"></div>
<div class="t" style="left:393.50px;top:342.96px;font-size:9.50px;color:#2c313a;font-weight:bold;transform:scaleX(0.9974);">aRecordedSample.wav</div>
<div class="t" style="left:861.00px;top:342.96px;font-size:9.50px;color:#2c313a;font-weight:bold;transform:scaleX(1.0000);">aRecordedSample.wav</div>
<svg class="a" style="left:0;top:0" width="1200" height="900"><path d="M384.0 367.1 L384.5 364.2 L385.0 365.4 L385.5 368.0 L386.0 368.0 L386.5 368.0 L387.0 366.4 L387.5 367.9 L388.0 364.5 L388.5 365.0 L389.0 359.5 L389.5 361.4 L390.0 367.9 L390.5 367.2 L391.0 367.8 L391.5 364.4 L392.0 365.4 L392.5 368.1 L393.0 363.9 L393.5 367.2 L394.0 366.3 L394.5 362.4 L395.0 367.6 L395.5 365.6 L396.0 363.3 L396.5 359.5 L397.0 366.6 L397.5 367.9 L398.0 368.1 L398.5 362.9 L399.0 361.3 L399.5 363.8 L400.0 365.1 L400.5 361.8 L401.0 366.2 L401.5 368.1 L402.0 364.4 L402.5 362.1 L403.0 366.9 L403.5 368.2 L404.0 368.0 L404.5 368.2 L405.0 368.1 L405.5 366.8 L406.0 368.2 L406.5 365.5 L407.0 362.2 L407.5 367.5 L408.0 367.1 L408.5 360.0 L409.0 368.0 L409.5 367.8 L410.0 365.1 L410.5 368.3 L411.0 367.1 L411.5 360.1 L412.0 365.9 L412.5 364.2 L413.0 361.0 L413.5 361.4 L414.0 366.9 L414.5 368.2 L415.0 368.3 L415.5 367.9 L416.0 367.3 L416.5 368.3 L417.0 368.3 L417.5 368.3 L418.0 365.0 L418.5 367.8 L419.0 367.2 L419.5 361.9 L420.0 366.4 L420.5 368.3 L421.0 367.3 L421.5 362.2 L422.0 368.4 L422.5 365.9 L423.0 365.8 L423.5 365.9 L424.0 361.7 L424.5 367.8 L425.0 368.2 L425.5 365.9 L426.0 367.5 L426.5 362.5 L427.0 361.9 L427.5 362.4 L428.0 368.0 L428.5 367.3 L429.0 368.5 L429.5 367.9 L430.0 360.2 L430.5 360.6 L431.0 360.3 L431.5 368.1 L432.0 368.2 L432.5 365.0 L433.0 362.2 L433.5 364.7 L434.0 368.5 L434.5 361.1 L435.0 363.5 L435.5 368.2 L436.0 367.5 L436.5 360.0 L437.0 367.1 L437.5 363.8 L438.0 368.4 L438.5 361.2 L439.0 368.4 L439.5 359.9 L440.0 367.5 L440.5 368.4 L441.0 360.1 L441.5 366.1 L442.0 366.9 L442.5 362.5 L443.0 368.0 L443.5 368.1 L444.0 368.0 L444.5 368.5 L445.0 367.5 L445.5 365.6 L446.0 367.1 L446.5 366.4 L447.0 366.2 L447.5 366.9 L448.0 368.7 L448.5 368.4 L449.0 363.9 L449.5 367.7 L450.0 365.9 L450.5 368.6 L451.0 368.1 L451.5 363.3 L452.0 365.9 L452.5 361.2 L453.0 365.3 L453.5 366.4 L454.0 366.9 L454.5 366.7 L455.0 364.3 L455.5 360.8 L456.0 365.9 L456.5 362.4 L457.0 368.6 L457.5 368.7 L458.0 368.7 L458.5 363.2 L459.0 368.6 L459.5 364.9 L460.0 361.8 L460.5 368.4 L461.0 367.4 L461.5 360.0 L462.0 368.6 L462.5 366.4 L463.0 368.5 L463.5 364.1 L464.0 366.1 L464.5 368.8 L465.0 365.3 L465.5 368.8 L466.0 363.3 L466.5 368.8 L467.0 368.9 L467.5 368.2 L468.0 367.3 L468.5 362.8 L469.0 368.7 L469.5 366.0 L470.0 368.8 L470.5 364.6 L471.0 368.9 L471.5 365.3 L472.0 368.9 L472.5 368.9 L473.0 367.1 L473.5 366.2 L474.0 368.3 L474.5 366.4 L475.0 368.8 L475.5 368.9 L476.0 368.1 L476.5 363.8 L477.0 366.7 L477.5 367.9 L478.0 368.4 L478.5 364.1 L479.0 368.7 L479.5 361.1 L480.0 363.0 L480.5 366.8 L481.0 367.6 L481.5 364.8 L482.0 368.0 L482.5 364.5 L483.0 367.6 L483.5 369.0 L484.0 369.0 L484.5 368.5 L485.0 369.0 L485.5 362.3 L486.0 368.4 L486.5 368.3 L487.0 368.9 L487.5 368.5 L488.0 360.6 L488.5 368.6 L489.0 368.3 L489.5 369.1 L490.0 367.1 L490.5 368.8 L491.0 369.2 L491.5 369.1 L492.0 369.2 L492.5 368.3 L493.0 366.1 L493.5 364.2 L494.0 364.6 L494.5 367.8 L495.0 360.6 L495.5 364.6 L496.0 369.2 L496.5 362.2 L497.0 364.5 L497.5 369.1 L498.0 367.0 L498.5 363.5 L499.0 366.2 L499.5 365.1 L500.0 368.8 L500.5 369.1 L501.0 369.2 L501.5 366.5 L502.0 365.8 L502.5 367.2 L503.0 363.7 L503.5 367.1 L504.0 365.5 L504.5 364.5 L505.0 369.3 L505.5 364.7 L506.0 364.5 L506.5 367.2 L507.0 367.4 L507.5 364.2 L508.0 365.7 L508.5 369.2 L509.0 364.5 L509.5 366.6 L510.0 369.4 L510.5 365.5 L511.0 365.4 L511.5 367.1 L512.0 367.5 L512.5 362.4 L513.0 361.1 L513.5 369.5 L514.0 363.6 L514.5 367.7 L515.0 369.1 L515.5 369.1 L516.0 369.3 L516.5 361.6 L517.0 363.6 L517.5 362.6 L518.0 369.1 L518.5 367.5 L519.0 369.5 L519.5 367.8 L520.0 369.4 L520.5 368.7 L521.0 369.6 L521.5 363.4 L522.0 362.1 L522.5 362.5 L523.0 368.4 L523.5 360.9 L524.0 368.5 L524.5 369.0 L525.0 369.5 L525.5 368.9 L526.0 369.1 L526.5 367.4 L527.0 368.4 L527.5 362.9 L528.0 366.2 L528.5 362.0 L529.0 365.2 L529.5 365.0 L530.0 364.8 L530.5 369.0 L531.0 362.3 L531.5 367.8 L532.0 369.0 L532.5 361.5 L533.0 366.0 L533.5 367.1 L534.0 369.5 L534.5 369.4 L535.0 367.6 L535.5 362.7 L536.0 368.0 L536.5 369.5 L537.0 368.8 L537.5 369.3 L538.0 367.0 L538.5 365.0 L539.0 368.3 L539.5 368.6 L540.0 369.8 L540.5 361.8 L541.0 367.7 L541.5 363.5 L542.0 369.2 L542.5 368.5 L543.0 362.1 L543.5 363.4 L544.0 369.9 L544.5 363.0 L545.0 366.9 L545.5 368.6 L546.0 364.1 L546.5 361.8 L547.0 369.8 L547.5 367.6 L548.0 362.4 L548.5 366.4 L549.0 368.2 L549.5 369.9 L550.0 369.5 L550.5 366.4 L551.0 369.8 L551.5 366.5 L552.0 369.9 L552.5 367.7 L553.0 368.7 L553.5 366.9 L554.0 369.2 L554.5 362.2 L555.0 363.4 L555.5 369.6 L556.0 362.2 L556.5 369.3 L557.0 368.0 L557.5 368.6 L558.0 366.3 L558.5 369.6 L559.0 369.1 L559.5 366.2 L560.0 364.7 L560.5 368.0 L561.0 362.2 L561.5 364.5 L562.0 369.7 L562.5 369.4 L563.0 368.1 L563.5 369.7 L564.0 366.4 L564.5 370.0 L565.0 369.8 L565.5 370.0 L566.0 370.2 L566.5 363.4 L567.0 365.7 L567.5 362.9 L568.0 369.9 L568.5 365.5 L569.0 366.5 L569.5 369.1 L570.0 370.0 L570.5 369.6 L571.0 362.6 L571.5 362.5 L572.0 369.2 L572.5 364.6 L573.0 370.3 L573.5 369.1 L574.0 370.0 L574.5 363.6 L575.0 368.9 L575.5 365.4 L576.0 370.3 L576.5 363.3 L577.0 365.7 L577.5 369.4 L578.0 362.7 L578.5 369.8 L579.0 369.5 L579.5 370.4 L580.0 363.4 L580.5 363.0 L581.0 369.9 L581.5 362.8 L582.0 369.2 L582.5 368.9 L583.0 363.3 L583.5 365.1 L584.0 364.8 L584.5 367.4 L585.0 369.6 L585.5 365.4 L586.0 370.1 L586.5 370.0 L587.0 370.5 L587.5 369.6 L588.0 364.0 L588.5 369.9 L589.0 370.4 L589.5 366.4 L590.0 370.1 L590.5 367.4 L591.0 365.9 L591.5 366.9 L592.0 364.7 L592.5 367.9 L593.0 366.1 L593.5 370.1 L594.0 370.4 L594.5 367.8 L595.0 369.3 L595.5 368.5 L596.0 365.2 L596.5 362.6 L597.0 368.8 L597.5 364.8 L598.0 370.6 L598.5 370.5 L599.0 362.9 L599.5 363.6 L600.0 364.5 L600.5 370.1 L601.0 363.4 L601.5 367.8 L602.0 370.3 L602.5 370.5 L603.0 370.2 L603.5 367.2 L604.0 370.7 L604.5 367.0 L605.0 369.9 L605.5 365.6 L606.0 370.7 L606.5 369.5 L607.0 367.4 L607.5 370.5 L608.0 369.4 L608.5 370.0 L609.0 370.0 L609.5 369.8 L610.0 364.7 L610.5 369.7 L611.0 366.5 L611.5 370.8 L612.0 369.4 L612.5 369.5 L613.0 369.1 L613.5 370.8 L614.0 367.5 L614.5 370.8 L615.0 369.8 L615.5 370.7 L616.0 368.7 L616.5 370.8 L617.0 365.7 L617.5 370.6 L618.0 363.7 L618.5 369.0 L619.0 364.0 L619.5 364.4 L620.0 365.5 L620.5 366.0 L621.0 369.6 L621.5 365.4 L622.0 370.6 L622.5 368.8 L623.0 370.9 L623.5 366.8 L624.0 371.0 L624.5 366.4 L625.0 365.4 L625.5 368.1 L626.0 367.8 L626.5 369.6 L627.0 369.5 L627.5 369.4 L628.0 371.0 L628.5 369.0 L629.0 366.3 L629.5 369.3 L630.0 369.1 L630.5 370.8 L631.0 370.9 L631.5 368.8 L632.0 367.7 L632.5 366.6 L633.0 368.8 L633.5 368.9 L634.0 363.6 L634.5 365.0 L635.0 366.6 L635.5 370.6 L636.0 368.9 L636.5 364.1 L637.0 365.9 L637.5 370.8 L638.0 366.3 L638.5 364.4 L639.0 365.5 L639.5 368.8 L640.0 370.5 L640.5 368.7 L641.0 370.8 L641.5 370.6 L642.0 367.1 L642.5 370.5 L643.0 370.7 L643.5 367.5 L644.0 364.7 L644.5 368.0 L645.0 370.6 L645.5 367.6 L646.0 365.6 L646.5 362.9 L647.0 369.7 L647.5 369.1 L648.0 366.3 L648.5 365.3 L649.0 367.4 L649.5 367.9 L650.0 369.9 L650.5 370.7 L651.0 367.6 L651.5 368.5 L652.0 370.5 L652.5 367.2 L653.0 370.6 L653.5 370.5 L654.0 370.2 L654.5 367.8 L655.0 367.5 L655.5 370.4 L656.0 370.1 L656.5 370.5 L657.0 364.5 L657.5 369.3 L658.0 370.6 L658.5 368.0 L659.0 367.2 L659.5 363.5 L660.0 370.0 L660.5 370.5 L661.0 369.2 L661.5 370.5 L662.0 370.5 L662.5 363.4 L663.0 370.2 L663.5 368.4 L664.0 365.2 L664.5 369.7 L665.0 370.4 L665.5 365.6 L666.0 370.5 L666.5 366.0 L667.0 366.0 L667.5 370.0 L668.0 370.0 L668.5 369.5 L669.0 366.5 L669.5 366.4 L670.0 367.9 L670.5 365.4 L671.0 369.8 L671.5 362.9 L672.0 364.2 L672.5 369.8 L673.0 365.9 L673.5 365.9 L674.0 364.1 L674.5 369.9 L675.0 367.2 L675.5 366.8 L676.0 368.6 L676.5 366.4 L677.0 368.8 L677.5 367.7 L678.0 369.9 L678.5 370.2 L679.0 370.1 L679.5 370.2 L680.0 369.3 L680.5 370.3 L681.0 366.4 L681.5 366.4 L682.0 370.2 L682.5 369.2 L683.0 364.9 L683.5 370.2 L684.0 363.5 L684.5 370.1 L685.0 370.1 L685.5 364.4 L686.0 367.0 L686.5 367.0 L687.0 370.1 L687.5 365.6 L688.0 369.3 L688.5 370.1 L689.0 369.5 L689.5 369.1 L690.0 362.7 L690.5 364.3 L691.0 370.1 L691.5 368.6 L692.0 369.1 L692.5 367.8 L693.0 364.1 L693.5 364.7 L694.0 370.1 L694.5 365.4 L695.0 370.1 L695.5 368.1 L696.0 369.8 L696.5 369.1 L697.0 369.5 L697.5 369.4 L698.0 366.1 L698.5 369.9 L699.0 370.0 L699.5 366.1 L700.0 366.8 L700.5 368.7 L701.0 363.5 L701.5 363.5 L702.0 369.5 L702.5 363.2 L703.0 368.6 L703.5 369.2 L704.0 367.3 L704.5 364.9 L705.0 368.5 L705.5 369.3 L706.0 365.8 L706.5 369.2 L707.0 364.4 L707.5 369.2 L708.0 362.7 L708.5 368.9 L709.0 365.0 L709.5 368.9 L710.0 368.6 L710.5 366.7 L711.0 368.1 L711.5 360.9 L712.0 368.8 L712.5 368.8 L713.0 360.5 L713.5 364.1 L714.0 368.4 L714.5 368.6 L715.0 367.3 L715.5 367.2 L716.0 364.3 L716.5 365.0 L717.0 368.3 L717.5 367.0 L718.0 361.1 L718.5 365.4 L719.0 366.7 L719.5 363.6 L720.0 362.8 L720.5 361.6 L721.0 364.4 L721.5 367.2 L722.0 367.9 L722.5 362.4 L723.0 364.3 L723.5 366.3 L724.0 364.3 L724.5 363.7 L725.0 367.4 L725.5 362.2 L726.0 365.5 L726.5 367.6 L727.0 367.3 L727.5 359.6 L728.0 367.4 L728.5 364.8 L729.0 365.0 L729.5 361.2 L730.0 365.8 L730.5 366.9 L731.0 365.8 L731.5 367.0 L732.0 366.0 L732.5 366.4 L733.0 367.0 L733.5 365.4 L734.0 365.8 L734.5 366.5 L735.0 358.9 L735.5 366.4 L736.0 365.4 L736.5 366.6 L737.0 360.8 L737.5 364.7 L738.0 366.1 L738.5 365.4 L739.0 360.5 L739.5 364.5 L740.0 363.7 L740.5 360.1 L741.0 359.8 L741.5 365.0 L742.0 364.6 L742.5 366.2 L743.0 365.5 L743.5 365.3 L744.0 364.4 L744.5 362.1 L745.0 358.2 L745.5 366.0 L746.0 358.7 L746.5 366.0 L747.0 362.6 L747.5 366.2 L748.0 362.4 L748.5 366.2 L749.0 365.9 L749.5 365.3 L750.0 359.3 L750.5 366.2 L751.0 363.3 L751.5 362.7 L752.0 361.2 L752.5 366.3 L753.0 364.3 L753.5 365.1 L754.0 364.1 L754.5 366.4 L755.0 364.8 L755.5 365.0 L756.0 364.9 L756.5 364.5 L757.0 367.0 L757.5 365.2 L758.0 363.4 L758.5 366.0 L759.0 359.5 L759.5 363.9 L760.0 367.3 L760.5 363.5 L761.0 366.5 L761.5 365.3 L762.0 360.8 L762.5 363.3 L763.0 366.6 L763.5 366.5 L764.0 365.4 L764.5 367.3 L765.0 366.3 L765.5 362.2 L766.0 362.3 L766.5 365.8 L767.0 365.9 L767.5 364.5 L768.0 367.1 L768.5 367.3 L769.0 364.9 L769.5 368.1 L770.0 362.0 L770.5 368.2 L771.0 368.2 L771.5 361.7 L772.0 365.0 L772.5 362.0 L773.0 365.5 L773.5 364.7 L774.0 364.9 L774.5 365.1 L775.0 364.1 L775.5 368.3 L776.0 364.1 L776.5 365.5 L777.0 363.7 L777.5 366.4 L778.0 368.1 L778.5 368.1 L779.0 365.8 L779.5 368.9 L780.0 368.9 L780.5 364.2 L781.0 363.0 L781.5 369.1 L782.0 366.6 L782.5 362.3 L783.0 368.0 L783.5 366.3 L784.0 369.1 L784.5 369.3 L785.0 369.2 L785.5 369.3 L786.0 369.3 L786.5 365.9 L787.0 365.8 L787.5 369.5 L788.0 366.1 L788.5 366.0 L789.0 367.0 L789.5 368.3 L790.0 369.3 L790.5 366.4 L791.0 369.8 L791.5 365.5 L792.0 369.2 L792.5 369.7 L793.0 368.4 L793.5 369.1 L794.0 368.8 L794.5 369.9 L795.0 369.3 L795.5 367.7 L796.0 369.3 L796.5 364.7 L797.0 368.3 L797.5 370.3 L798.0 367.3 L798.5 369.7 L799.0 364.6 L799.5 368.3 L800.0 369.4 L800.5 369.7 L801.0 368.5 L801.5 366.8 L802.0 370.7 L802.5 369.7 L803.0 367.0 L803.5 370.8 L804.0 367.2 L804.5 369.1 L805.0 367.0 L805.5 368.4 L806.0 370.3 L806.5 369.4 L807.0 370.9 L807.5 366.7 L808.0 369.3 L808.5 370.1 L809.0 370.9 L809.5 368.2 L810.0 371.3 L810.5 368.5 L811.0 369.8 L811.5 367.8 L812.0 370.4 L812.5 371.3 L813.0 371.4 L813.5 371.0 L814.0 370.9 L814.5 371.6 L815.0 367.5 L815.5 371.7 L816.0 369.3 L816.5 370.4 L817.0 370.8 L817.5 371.9 L818.0 369.1 L818.5 370.8 L819.0 369.8 L819.5 368.8 L820.0 369.7 L820.5 371.9 L821.0 372.0 L821.5 372.2 L822.0 371.2 L822.5 371.6 L823.0 369.7 L823.5 371.2 L824.0 372.4 L824.5 372.3 L825.0 371.3 L825.5 371.2 L826.0 372.0 L826.5 370.0 L827.0 372.5 L827.5 372.5 L828.0 370.7 L828.5 371.0 L829.0 371.3 L829.5 371.9 L830.0 372.8 L830.5 371.7 L831.0 372.0 L831.5 372.3 L832.0 373.0 L832.5 372.9 L833.0 372.7 L833.5 373.0 L834.0 372.4 L834.5 372.4 L835.0 373.2 L835.5 373.2 L836.0 372.3 L836.5 373.3 L837.0 373.3 L837.5 372.7 L838.0 373.2 L838.5 372.9 L839.0 373.2 L839.5 373.5 L840.0 373.2 L840.5 373.6 L841.0 373.6 L841.5 373.7 L842.0 373.5 L842.5 373.7 L843.0 373.7 L843.5 373.7 L844.0 373.7 L844.5 373.6 L845.0 373.6 L845.5 373.7 L846.0 373.7 L846.5 373.4 L847.0 373.7 L847.5 373.5 L848.0 373.6 L848.5 373.5 L849.0 373.6 L849.5 373.7 L850.0 373.5 L850.5 373.7 L851.0 373.5 L851.5 373.6 L852.0 373.7 L852.0 375.4 L851.5 375.3 L851.0 375.3 L850.5 375.3 L850.0 375.4 L849.5 375.3 L849.0 375.3 L848.5 375.3 L848.0 375.3 L847.5 375.3 L847.0 375.3 L846.5 375.5 L846.0 375.6 L845.5 375.3 L845.0 375.3 L844.5 375.3 L844.0 375.5 L843.5 375.6 L843.0 375.5 L842.5 375.4 L842.0 375.3 L841.5 375.4 L841.0 375.4 L840.5 375.8 L840.0 375.6 L839.5 375.5 L839.0 375.5 L838.5 375.7 L838.0 375.7 L837.5 376.0 L837.0 376.6 L836.5 375.9 L836.0 376.7 L835.5 376.9 L835.0 377.0 L834.5 375.9 L834.0 375.9 L833.5 375.9 L833.0 376.0 L832.5 376.0 L832.0 376.2 L831.5 377.2 L831.0 376.3 L830.5 378.0 L830.0 376.2 L829.5 378.4 L829.0 377.4 L828.5 376.3 L828.0 378.4 L827.5 376.6 L827.0 376.4 L826.5 379.1 L826.0 376.5 L825.5 376.9 L825.0 379.2 L824.5 377.5 L824.0 379.5 L823.5 377.1 L823.0 376.7 L822.5 379.7 L822.0 379.3 L821.5 376.8 L821.0 376.9 L820.5 376.9 L820.0 380.2 L819.5 379.1 L819.0 377.7 L818.5 377.3 L818.0 378.0 L817.5 380.9 L817.0 377.1 L816.5 377.7 L816.0 377.3 L815.5 378.9 L815.0 377.9 L814.5 377.3 L814.0 378.5 L813.5 378.8 L813.0 379.6 L812.5 377.7 L812.0 379.1 L811.5 378.8 L811.0 381.4 L810.5 377.9 L810.0 380.8 L809.5 378.8 L809.0 380.6 L808.5 378.0 L808.0 380.2 L807.5 378.2 L807.0 380.8 L806.5 381.3 L806.0 378.1 L805.5 382.5 L805.0 381.6 L804.5 378.5 L804.0 382.3 L803.5 382.1 L803.0 382.7 L802.5 380.3 L802.0 378.7 L801.5 378.8 L801.0 383.1 L800.5 381.2 L800.0 383.2 L799.5 379.1 L799.0 382.8 L798.5 380.9 L798.0 382.8 L797.5 384.5 L797.0 379.3 L796.5 382.6 L796.0 382.7 L795.5 379.9 L795.0 381.5 L794.5 383.0 L794.0 381.9 L793.5 381.1 L793.0 379.1 L792.5 383.9 L792.0 382.6 L791.5 379.2 L791.0 382.0 L790.5 379.2 L790.0 385.4 L789.5 385.1 L789.0 382.7 L788.5 379.4 L788.0 384.4 L787.5 383.5 L787.0 379.8 L786.5 380.0 L786.0 379.6 L785.5 384.9 L785.0 386.2 L784.5 383.0 L784.0 379.8 L783.5 380.1 L783.0 379.9 L782.5 381.5 L782.0 386.2 L781.5 381.0 L781.0 381.4 L780.5 382.4 L780.0 380.2 L779.5 382.4 L779.0 386.5 L778.5 381.5 L778.0 381.5 L777.5 380.8 L777.0 384.9 L776.5 381.4 L776.0 386.6 L775.5 380.4 L775.0 380.5 L774.5 382.1 L774.0 380.9 L773.5 383.3 L773.0 383.6 L772.5 383.5 L772.0 385.5 L771.5 383.6 L771.0 381.0 L770.5 381.5 L770.0 383.2 L769.5 385.0 L769.0 385.8 L768.5 383.7 L768.0 381.8 L767.5 386.1 L767.0 388.7 L766.5 381.7 L766.0 382.5 L765.5 381.9 L765.0 383.8 L764.5 382.8 L764.0 386.2 L763.5 383.2 L763.0 387.5 L762.5 384.7 L762.0 381.5 L761.5 383.5 L761.0 389.6 L760.5 388.9 L760.0 384.8 L759.5 385.1 L759.0 381.8 L758.5 383.3 L758.0 387.8 L757.5 384.6 L757.0 387.9 L756.5 388.3 L756.0 384.2 L755.5 382.3 L755.0 382.2 L754.5 382.3 L754.0 382.8 L753.5 389.0 L753.0 387.1 L752.5 386.5 L752.0 388.5 L751.5 389.4 L751.0 387.8 L750.5 389.5 L750.0 388.1 L749.5 382.8 L749.0 388.0 L748.5 382.9 L748.0 383.3 L747.5 390.8 L747.0 382.8 L746.5 389.0 L746.0 388.4 L745.5 389.1 L745.0 389.6 L744.5 384.1 L744.0 386.6 L743.5 384.9 L743.0 383.4 L742.5 387.5 L742.0 383.1 L741.5 383.3 L741.0 383.3 L740.5 383.7 L740.0 382.7 L739.5 383.3 L739.0 388.5 L738.5 386.1 L738.0 390.8 L737.5 385.2 L737.0 385.9 L736.5 387.7 L736.0 382.6 L735.5 388.0 L735.0 384.6 L734.5 387.0 L734.0 382.7 L733.5 386.4 L733.0 383.5 L732.5 383.4 L732.0 381.9 L731.5 390.5 L731.0 387.0 L730.5 386.0 L730.0 389.8 L729.5 384.1 L729.0 385.3 L728.5 386.2 L728.0 384.5 L727.5 383.9 L727.0 386.9 L726.5 384.0 L726.0 389.9 L725.5 382.7 L725.0 385.1 L724.5 389.0 L724.0 382.7 L723.5 383.0 L723.0 381.6 L722.5 385.6 L722.0 382.6 L721.5 384.5 L721.0 382.8 L720.5 385.0 L720.0 385.2 L719.5 387.7 L719.0 381.2 L718.5 385.6 L718.0 382.3 L717.5 385.4 L717.0 383.7 L716.5 382.4 L716.0 382.6 L715.5 385.9 L715.0 380.4 L714.5 380.7 L714.0 383.8 L713.5 381.9 L713.0 385.6 L712.5 381.4 L712.0 388.0 L711.5 384.6 L711.0 380.3 L710.5 380.2 L710.0 380.8 L709.5 380.1 L709.0 385.8 L708.5 380.5 L708.0 380.2 L707.5 381.5 L707.0 382.4 L706.5 381.2 L706.0 384.1 L705.5 385.4 L705.0 380.3 L704.5 382.8 L704.0 384.0 L703.5 381.1 L703.0 385.6 L702.5 381.3 L702.0 379.7 L701.5 379.1 L701.0 379.2 L700.5 380.3 L700.0 380.0 L699.5 383.9 L699.0 384.0 L698.5 382.2 L698.0 381.0 L697.5 379.3 L697.0 386.1 L696.5 384.5 L696.0 380.9 L695.5 384.0 L695.0 380.9 L694.5 386.6 L694.0 379.2 L693.5 379.1 L693.0 379.0 L692.5 379.3 L692.0 382.9 L691.5 383.7 L691.0 380.2 L690.5 381.9 L690.0 380.9 L689.5 379.7 L689.0 383.0 L688.5 379.4 L688.0 380.3 L687.5 379.2 L687.0 378.9 L686.5 379.5 L686.0 384.3 L685.5 384.1 L685.0 378.8 L684.5 379.1 L684.0 385.9 L683.5 384.8 L683.0 385.1 L682.5 384.1 L682.0 381.5 L681.5 383.1 L681.0 382.0 L680.5 378.8 L680.0 378.9 L679.5 385.6 L679.0 378.7 L678.5 385.3 L678.0 381.8 L677.5 379.5 L677.0 382.9 L676.5 384.6 L676.0 384.3 L675.5 386.3 L675.0 382.5 L674.5 385.2 L674.0 379.5 L673.5 379.5 L673.0 385.8 L672.5 379.1 L672.0 378.6 L671.5 379.0 L671.0 381.9 L670.5 380.8 L670.0 380.1 L669.5 379.2 L669.0 384.3 L668.5 383.1 L668.0 378.6 L667.5 378.7 L667.0 380.2 L666.5 380.3 L666.0 384.3 L665.5 382.6 L665.0 384.9 L664.5 379.2 L664.0 378.8 L663.5 381.8 L663.0 381.5 L662.5 378.7 L662.0 380.9 L661.5 383.3 L661.0 378.9 L660.5 380.7 L660.0 385.0 L659.5 382.8 L659.0 380.0 L658.5 379.4 L658.0 381.8 L657.5 379.0 L657.0 383.3 L656.5 381.7 L656.0 378.6 L655.5 385.4 L655.0 380.2 L654.5 378.7 L654.0 381.1 L653.5 379.4 L653.0 379.4 L652.5 378.4 L652.0 378.8 L651.5 384.8 L651.0 379.8 L650.5 378.5 L650.0 378.3 L649.5 381.9 L649.0 386.1 L648.5 378.8 L648.0 378.3 L647.5 378.5 L647.0 383.0 L646.5 381.0 L646.0 378.8 L645.5 379.5 L645.0 386.2 L644.5 384.5 L644.0 380.7 L643.5 379.3 L643.0 380.5 L642.5 383.2 L642.0 384.6 L641.5 385.2 L641.0 378.5 L640.5 379.0 L640.0 378.8 L639.5 385.0 L639.0 378.4 L638.5 378.8 L638.0 378.4 L637.5 379.2 L637.0 385.1 L636.5 378.4 L636.0 385.5 L635.5 385.9 L635.0 383.4 L634.5 386.1 L634.0 378.3 L633.5 379.3 L633.0 378.1 L632.5 382.9 L632.0 378.1 L631.5 378.1 L631.0 379.6 L630.5 379.6 L630.0 378.2 L629.5 378.3 L629.0 382.9 L628.5 378.5 L628.0 381.1 L627.5 379.6 L627.0 381.5 L626.5 380.7 L626.0 378.8 L625.5 380.4 L625.0 378.1 L624.5 378.0 L624.0 380.5 L623.5 384.5 L623.0 378.5 L622.5 379.2 L622.0 379.3 L621.5 378.3 L621.0 383.8 L620.5 378.5 L620.0 378.3 L619.5 381.2 L619.0 379.3 L618.5 378.1 L618.0 385.8 L617.5 378.2 L617.0 385.6 L616.5 380.1 L616.0 385.0 L615.5 378.8 L615.0 380.2 L614.5 381.3 L614.0 384.8 L613.5 380.6 L613.0 378.4 L612.5 384.5 L612.0 383.6 L611.5 384.8 L611.0 378.5 L610.5 378.5 L610.0 386.3 L609.5 379.6 L609.0 380.8 L608.5 385.6 L608.0 378.9 L607.5 382.2 L607.0 378.3 L606.5 380.7 L606.0 378.3 L605.5 380.7 L605.0 378.6 L604.5 378.6 L604.0 379.2 L603.5 378.6 L603.0 381.2 L602.5 378.6 L602.0 379.4 L601.5 381.5 L601.0 378.4 L600.5 383.3 L600.0 380.0 L599.5 379.5 L599.0 381.1 L598.5 378.7 L598.0 379.1 L597.5 385.2 L597.0 383.9 L596.5 378.5 L596.0 381.9 L595.5 378.8 L595.0 386.5 L594.5 379.3 L594.0 384.8 L593.5 378.9 L593.0 378.8 L592.5 379.6 L592.0 379.2 L591.5 378.6 L591.0 384.4 L590.5 382.2 L590.0 379.9 L589.5 380.1 L589.0 380.5 L588.5 378.6 L588.0 386.6 L587.5 386.5 L587.0 381.0 L586.5 378.6 L586.0 383.2 L585.5 378.6 L585.0 379.6 L584.5 379.4 L584.0 383.5 L583.5 383.1 L583.0 378.9 L582.5 380.6 L582.0 379.1 L581.5 386.2 L581.0 380.5 L580.5 378.6 L580.0 382.0 L579.5 383.4 L579.0 379.3 L578.5 382.9 L578.0 381.8 L577.5 379.3 L577.0 385.4 L576.5 379.2 L576.0 378.7 L575.5 378.7 L575.0 384.2 L574.5 378.7 L574.0 379.8 L573.5 385.8 L573.0 380.6 L572.5 380.3 L572.0 384.4 L571.5 379.1 L571.0 378.9 L570.5 379.8 L570.0 378.8 L569.5 379.7 L569.0 380.0 L568.5 378.8 L568.0 386.1 L567.5 379.7 L567.0 387.2 L566.5 385.4 L566.0 380.1 L565.5 378.8 L565.0 386.8 L564.5 380.1 L564.0 386.4 L563.5 380.3 L563.0 379.2 L562.5 386.5 L562.0 383.7 L561.5 379.3 L561.0 379.7 L560.5 379.2 L560.0 383.5 L559.5 379.2 L559.0 380.4 L558.5 378.9 L558.0 386.2 L557.5 379.5 L557.0 382.8 L556.5 378.9 L556.0 383.2 L555.5 379.5 L555.0 380.9 L554.5 382.5 L554.0 380.8 L553.5 379.0 L553.0 379.4 L552.5 381.9 L552.0 379.0 L551.5 383.2 L551.0 379.6 L550.5 379.8 L550.0 386.2 L549.5 384.3 L549.0 381.6 L548.5 384.0 L548.0 383.5 L547.5 383.0 L547.0 379.3 L546.5 379.6 L546.0 385.3 L545.5 386.4 L545.0 379.1 L544.5 381.0 L544.0 383.4 L543.5 379.1 L543.0 385.3 L542.5 380.8 L542.0 379.7 L541.5 379.6 L541.0 382.6 L540.5 379.3 L540.0 379.8 L539.5 380.2 L539.0 381.5 L538.5 380.7 L538.0 386.0 L537.5 379.8 L537.0 379.3 L536.5 379.3 L536.0 379.4 L535.5 387.8 L535.0 379.7 L534.5 386.3 L534.0 379.5 L533.5 380.6 L533.0 380.1 L532.5 379.9 L532.0 384.0 L531.5 380.3 L531.0 379.4 L530.5 379.3 L530.0 382.9 L529.5 381.1 L529.0 379.3 L528.5 381.9 L528.0 386.6 L527.5 385.1 L527.0 387.3 L526.5 379.7 L526.0 380.0 L525.5 387.0 L525.0 385.4 L524.5 379.4 L524.0 381.0 L523.5 382.4 L523.0 380.8 L522.5 380.1 L522.0 383.8 L521.5 379.6 L521.0 384.3 L520.5 385.6 L520.0 380.5 L519.5 380.3 L519.0 381.6 L518.5 379.5 L518.0 386.5 L517.5 383.8 L517.0 381.8 L516.5 379.7 L516.0 381.9 L515.5 382.5 L515.0 387.3 L514.5 380.2 L514.0 387.7 L513.5 381.4 L513.0 387.2 L512.5 379.9 L512.0 379.7 L511.5 381.5 L511.0 380.3 L510.5 383.8 L510.0 380.2 L509.5 379.6 L509.0 380.4 L508.5 380.2 L508.0 379.7 L507.5 383.0 L507.0 383.7 L506.5 380.9 L506.0 388.0 L505.5 380.0 L505.0 380.3 L504.5 380.2 L504.0 379.7 L503.5 382.2 L503.0 384.6 L502.5 379.7 L502.0 383.8 L501.5 383.2 L501.0 385.9 L500.5 380.9 L500.0 379.7 L499.5 384.0 L499.0 386.8 L498.5 385.8 L498.0 385.9 L497.5 382.2 L497.0 385.6 L496.5 383.3 L496.0 386.0 L495.5 383.5 L495.0 380.0 L494.5 380.7 L494.0 386.7 L493.5 383.7 L493.0 382.3 L492.5 380.3 L492.0 379.8 L491.5 381.3 L491.0 380.5 L490.5 382.1 L490.0 382.1 L489.5 381.2 L489.0 381.0 L488.5 388.2 L488.0 382.6 L487.5 388.2 L487.0 381.7 L486.5 381.8 L486.0 380.4 L485.5 384.0 L485.0 386.3 L484.5 380.2 L484.0 384.9 L483.5 380.1 L483.0 381.0 L482.5 383.6 L482.0 386.2 L481.5 388.7 L481.0 382.3 L480.5 386.3 L480.0 381.7 L479.5 380.1 L479.0 382.0 L478.5 382.7 L478.0 380.0 L477.5 380.0 L477.0 380.3 L476.5 380.8 L476.0 380.9 L475.5 380.4 L475.0 380.3 L474.5 380.6 L474.0 380.2 L473.5 387.8 L473.0 381.1 L472.5 386.8 L472.0 386.7 L471.5 385.9 L471.0 388.0 L470.5 381.7 L470.0 380.1 L469.5 384.5 L469.0 387.7 L468.5 380.7 L468.0 387.6 L467.5 380.3 L467.0 385.6 L466.5 380.8 L466.0 388.6 L465.5 388.9 L465.0 382.5 L464.5 381.2 L464.0 381.9 L463.5 380.2 L463.0 381.1 L462.5 381.2 L462.0 381.9 L461.5 386.4 L461.0 382.3 L460.5 388.4 L460.0 388.6 L459.5 380.4 L459.0 384.8 L458.5 387.5 L458.0 384.3 L457.5 380.8 L457.0 382.0 L456.5 380.4 L456.0 388.3 L455.5 380.9 L455.0 387.2 L454.5 388.2 L454.0 382.8 L453.5 384.6 L453.0 382.6 L452.5 382.1 L452.0 385.5 L451.5 382.6 L451.0 381.0 L450.5 383.1 L450.0 385.8 L449.5 382.7 L449.0 383.1 L448.5 382.3 L448.0 386.1 L447.5 380.6 L447.0 380.3 L446.5 382.9 L446.0 387.9 L445.5 387.7 L445.0 382.3 L444.5 387.8 L444.0 382.0 L443.5 383.5 L443.0 381.2 L442.5 380.8 L442.0 387.2 L441.5 388.2 L441.0 384.2 L440.5 380.4 L440.0 383.1 L439.5 384.3 L439.0 386.6 L438.5 386.3 L438.0 380.6 L437.5 380.7 L437.0 388.5 L436.5 381.9 L436.0 386.2 L435.5 386.1 L435.0 382.5 L434.5 386.0 L434.0 384.4 L433.5 386.2 L433.0 382.6 L432.5 387.8 L432.0 380.9 L431.5 381.0 L431.0 381.7 L430.5 389.3 L430.0 382.3 L429.5 384.8 L429.0 381.2 L428.5 380.5 L428.0 383.0 L427.5 385.5 L427.0 386.4 L426.5 389.3 L426.0 381.0 L425.5 386.0 L425.0 385.9 L424.5 381.8 L424.0 384.9 L423.5 389.2 L423.0 380.6 L422.5 380.8 L422.0 388.7 L421.5 380.8 L421.0 381.2 L420.5 380.7 L420.0 382.7 L419.5 389.5 L419.0 380.8 L418.5 381.7 L418.0 380.8 L417.5 387.5 L417.0 381.8 L416.5 380.9 L416.0 380.7 L415.5 380.9 L415.0 380.7 L414.5 384.3 L414.0 382.1 L413.5 386.4 L413.0 386.2 L412.5 380.7 L412.0 384.1 L411.5 385.0 L411.0 383.6 L410.5 382.3 L410.0 381.4 L409.5 382.9 L409.0 381.2 L408.5 380.9 L408.0 387.8 L407.5 382.3 L407.0 387.5 L406.5 387.8 L406.0 382.6 L405.5 387.6 L405.0 381.3 L404.5 386.1 L404.0 380.9 L403.5 382.7 L403.0 384.8 L402.5 381.5 L402.0 389.7 L401.5 385.2 L401.0 384.8 L400.5 388.9 L400.0 382.7 L399.5 384.0 L399.0 381.7 L398.5 383.8 L398.0 384.9 L397.5 383.0 L397.0 386.0 L396.5 381.0 L396.0 381.6 L395.5 387.8 L395.0 383.9 L394.5 385.3 L394.0 381.7 L393.5 384.0 L393.0 382.6 L392.5 381.3 L392.0 381.0 L391.5 382.2 L391.0 384.0 L390.5 386.9 L390.0 381.1 L389.5 381.7 L389.0 381.0 L388.5 382.4 L388.0 389.0 L387.5 381.4 L387.0 387.1 L386.5 381.0 L386.0 382.7 L385.5 383.3 L385.0 382.2 L384.5 381.0 L384.0 381.2Z" fill="#7888a2"/><path d="M853.0 362.7 L853.5 367.0 L854.0 363.9 L854.5 366.4 L855.0 363.8 L855.5 361.4 L856.0 366.7 L856.5 362.5 L857.0 362.6 L857.5 361.5 L858.0 361.0 L858.5 365.0 L859.0 360.0 L859.5 360.6 L860.0 366.8 L860.5 365.9 L861.0 365.9 L861.5 367.1 L862.0 365.4 L862.5 367.0 L863.0 361.4 L863.5 366.2 L864.0 365.9 L864.5 367.1 L865.0 359.4 L865.5 364.9 L866.0 364.7 L866.5 359.2 L867.0 366.9 L867.5 366.6 L868.0 367.1 L868.5 363.0 L869.0 367.2 L869.5 364.3 L870.0 363.0 L870.5 360.8 L871.0 367.2 L871.5 365.1 L872.0 366.5 L872.5 365.8 L873.0 364.2 L873.5 367.0 L874.0 362.5 L874.5 361.4 L875.0 365.9 L875.5 361.2 L876.0 365.9 L876.5 362.1 L877.0 366.8 L877.5 365.6 L878.0 361.8 L878.5 361.6 L879.0 367.2 L879.5 359.5 L880.0 366.8 L880.5 363.9 L881.0 364.9 L881.5 365.7 L882.0 367.3 L882.5 359.3 L883.0 359.8 L883.5 361.7 L884.0 360.7 L884.5 363.8 L885.0 363.4 L885.5 364.8 L886.0 364.1 L886.5 365.0 L887.0 359.7 L887.5 366.6 L888.0 367.2 L888.5 359.6 L889.0 366.8 L889.5 365.0 L890.0 367.3 L890.5 366.7 L891.0 366.7 L891.5 367.3 L892.0 361.4 L892.5 364.6 L893.0 367.1 L893.5 365.6 L894.0 364.2 L894.5 366.6 L895.0 367.0 L895.5 366.2 L896.0 367.4 L896.5 361.1 L897.0 364.8 L897.5 366.8 L898.0 366.7 L898.5 367.3 L899.0 361.0 L899.5 367.4 L900.0 365.8 L900.5 367.4 L901.0 359.7 L901.5 367.3 L902.0 366.4 L902.5 364.3 L903.0 361.8 L903.5 362.9 L904.0 362.6 L904.5 362.3 L905.0 360.4 L905.5 361.1 L906.0 362.6 L906.5 365.4 L907.0 364.8 L907.5 362.3 L908.0 364.4 L908.5 365.8 L909.0 363.1 L909.5 366.3 L910.0 366.3 L910.5 362.3 L911.0 365.5 L911.5 367.3 L912.0 367.4 L912.5 364.7 L913.0 360.4 L913.5 361.6 L914.0 359.8 L914.5 366.1 L915.0 367.6 L915.5 364.9 L916.0 360.5 L916.5 365.2 L917.0 365.4 L917.5 363.7 L918.0 366.6 L918.5 366.6 L919.0 363.8 L919.5 367.6 L920.0 366.3 L920.5 364.9 L921.0 359.8 L921.5 366.1 L922.0 359.3 L922.5 365.3 L923.0 367.5 L923.5 359.6 L924.0 365.5 L924.5 360.9 L925.0 362.0 L925.5 361.0 L926.0 367.5 L926.5 365.5 L927.0 367.5 L927.5 364.4 L928.0 366.7 L928.5 364.3 L929.0 366.3 L929.5 367.0 L930.0 367.8 L930.5 361.8 L931.0 364.0 L931.5 365.7 L932.0 367.2 L932.5 365.4 L933.0 365.0 L933.5 367.7 L934.0 362.9 L934.5 367.8 L935.0 365.5 L935.5 364.7 L936.0 367.8 L936.5 362.8 L937.0 363.5 L937.5 367.6 L938.0 367.8 L938.5 365.0 L939.0 366.2 L939.5 367.9 L940.0 365.0 L940.5 366.3 L941.0 367.4 L941.5 360.5 L942.0 367.1 L942.5 362.3 L943.0 364.8 L943.5 365.8 L944.0 367.4 L944.5 363.6 L945.0 367.1 L945.5 366.0 L946.0 367.5 L946.5 366.9 L947.0 359.9 L947.5 365.3 L948.0 365.6 L948.5 366.6 L949.0 367.9 L949.5 366.9 L950.0 367.7 L950.5 367.5 L951.0 364.3 L951.5 367.8 L952.0 368.0 L952.5 362.1 L953.0 366.4 L953.5 362.5 L954.0 367.0 L954.5 366.9 L955.0 367.7 L955.5 365.9 L956.0 366.3 L956.5 363.8 L957.0 361.2 L957.5 366.9 L958.0 365.0 L958.5 361.6 L959.0 365.9 L959.5 367.5 L960.0 366.9 L960.5 365.4 L961.0 366.9 L961.5 367.9 L962.0 367.3 L962.5 368.1 L963.0 367.1 L963.5 367.4 L964.0 367.4 L964.5 368.1 L965.0 367.5 L965.5 361.2 L966.0 361.6 L966.5 368.1 L967.0 368.2 L967.5 364.5 L968.0 366.8 L968.5 364.1 L969.0 362.2 L969.5 364.9 L970.0 368.2 L970.5 363.7 L971.0 368.3 L971.5 368.1 L972.0 367.5 L972.5 368.3 L973.0 364.8 L973.5 362.3 L974.0 364.0 L974.5 366.7 L975.0 367.3 L975.5 362.4 L976.0 367.6 L976.5 362.2 L977.0 368.3 L977.5 368.3 L978.0 368.0 L978.5 363.6 L979.0 364.3 L979.5 363.6 L980.0 367.7 L980.5 360.8 L981.0 361.1 L981.5 363.8 L982.0 365.1 L982.5 368.4 L983.0 366.9 L983.5 361.1 L984.0 363.5 L984.5 364.3 L985.0 367.9 L985.5 360.5 L986.0 366.0 L986.5 368.5 L987.0 367.1 L987.5 367.7 L988.0 364.3 L988.5 368.0 L989.0 366.3 L989.5 361.1 L990.0 367.8 L990.5 368.4 L991.0 367.6 L991.5 366.0 L992.0 368.3 L992.5 365.5 L993.0 363.6 L993.5 368.5 L994.0 367.5 L994.5 368.6 L995.0 368.3 L995.5 366.9 L996.0 367.7 L996.5 367.5 L997.0 368.6 L997.5 360.3 L998.0 368.6 L998.5 360.5 L999.0 368.6 L999.5 367.1 L1000.0 366.2 L1000.5 361.5 L1001.0 365.3 L1001.5 365.1 L1002.0 368.2 L1002.5 368.7 L1003.0 362.7 L1003.5 368.4 L1004.0 362.6 L1004.5 368.5 L1005.0 362.9 L1005.5 367.8 L1006.0 363.0 L1006.5 367.6 L1007.0 367.6 L1007.5 368.3 L1008.0 366.0 L1008.5 363.1 L1009.0 361.8 L1009.5 366.7 L1010.0 368.6 L1010.5 365.9 L1011.0 364.8 L1011.5 367.2 L1012.0 368.8 L1012.5 367.2 L1013.0 364.4 L1013.5 362.8 L1014.0 363.6 L1014.5 368.2 L1015.0 366.6 L1015.5 367.9 L1016.0 365.1 L1016.5 361.9 L1017.0 368.1 L1017.5 366.2 L1018.0 368.6 L1018.5 368.0 L1019.0 360.9 L1019.5 362.6 L1020.0 361.1 L1020.5 363.3 L1021.0 365.1 L1021.5 368.2 L1022.0 361.2 L1022.5 365.4 L1023.0 368.0 L1023.5 369.0 L1024.0 365.1 L1024.5 368.9 L1025.0 367.8 L1025.5 367.5 L1026.0 366.3 L1026.5 368.9 L1027.0 362.3 L1027.5 368.9 L1028.0 368.5 L1028.5 366.7 L1029.0 367.0 L1029.5 368.6 L1030.0 369.0 L1030.5 366.1 L1031.0 367.7 L1031.5 367.4 L1032.0 366.5 L1032.5 364.2 L1033.0 360.8 L1033.5 369.0 L1034.0 367.8 L1034.5 361.3 L1035.0 364.0 L1035.5 364.0 L1036.0 368.7 L1036.5 369.2 L1037.0 368.8 L1037.5 364.9 L1038.0 362.5 L1038.5 362.7 L1039.0 362.0 L1039.5 369.0 L1040.0 368.2 L1040.5 365.3 L1041.0 369.1 L1041.5 364.6 L1042.0 364.8 L1042.5 366.1 L1043.0 366.7 L1043.5 369.1 L1044.0 365.4 L1044.5 368.9 L1045.0 363.3 L1045.5 369.2 L1046.0 369.2 L1046.5 369.0 L1047.0 368.6 L1047.5 368.1 L1048.0 362.8 L1048.5 365.3 L1049.0 361.7 L1049.5 368.3 L1050.0 367.2 L1050.5 363.9 L1051.0 369.1 L1051.5 365.4 L1052.0 367.4 L1052.5 363.3 L1053.0 362.9 L1053.5 369.3 L1054.0 369.0 L1054.5 366.4 L1055.0 369.2 L1055.5 367.5 L1056.0 368.1 L1056.5 369.4 L1057.0 368.5 L1057.5 367.6 L1058.0 369.4 L1058.5 365.6 L1059.0 368.8 L1059.5 368.9 L1060.0 367.1 L1060.5 361.1 L1061.0 366.8 L1061.5 363.0 L1062.0 366.1 L1062.5 368.4 L1063.0 364.1 L1063.5 362.0 L1064.0 368.7 L1064.5 364.9 L1065.0 366.1 L1065.5 367.0 L1066.0 369.5 L1066.5 368.7 L1067.0 367.6 L1067.5 369.1 L1068.0 368.5 L1068.5 369.6 L1069.0 367.8 L1069.5 366.8 L1070.0 369.4 L1070.5 368.8 L1071.0 365.1 L1071.5 362.2 L1072.0 362.4 L1072.5 369.6 L1073.0 366.8 L1073.5 368.6 L1074.0 368.1 L1074.5 369.6 L1075.0 362.8 L1075.5 369.1 L1076.0 369.4 L1076.5 365.5 L1077.0 368.3 L1077.5 366.6 L1078.0 366.1 L1078.5 365.1 L1079.0 366.6 L1079.5 364.2 L1080.0 368.7 L1080.5 369.4 L1081.0 363.2 L1081.5 362.5 L1082.0 368.9 L1082.5 366.2 L1083.0 365.9 L1083.5 369.8 L1084.0 369.8 L1084.5 368.8 L1085.0 366.8 L1085.5 368.0 L1086.0 362.5 L1086.5 361.5 L1087.0 366.6 L1087.5 368.9 L1088.0 369.6 L1088.5 364.8 L1089.0 364.2 L1089.5 367.4 L1090.0 367.2 L1090.5 366.8 L1091.0 365.2 L1091.5 365.6 L1092.0 364.8 L1092.5 364.8 L1093.0 368.2 L1093.5 367.6 L1094.0 369.8 L1094.5 368.0 L1095.0 364.8 L1095.5 361.6 L1096.0 365.1 L1096.5 369.9 L1097.0 369.9 L1097.5 367.3 L1098.0 362.5 L1098.5 369.8 L1099.0 365.4 L1099.5 369.8 L1100.0 364.9 L1100.5 361.8 L1101.0 366.5 L1101.5 364.5 L1102.0 369.1 L1102.5 369.9 L1103.0 369.9 L1103.5 368.6 L1104.0 369.9 L1104.5 368.5 L1105.0 362.4 L1105.5 369.5 L1106.0 369.3 L1106.5 369.4 L1107.0 365.0 L1107.5 369.1 L1108.0 369.5 L1108.5 369.7 L1109.0 363.5 L1109.5 365.1 L1110.0 369.2 L1110.5 367.9 L1111.0 369.6 L1111.5 366.8 L1112.0 367.0 L1112.5 369.4 L1113.0 368.7 L1113.5 363.5 L1114.0 363.5 L1114.5 369.0 L1115.0 369.7 L1115.5 369.8 L1116.0 369.6 L1116.5 369.7 L1117.0 365.8 L1117.5 368.8 L1118.0 365.4 L1118.5 361.7 L1119.0 369.2 L1119.5 365.7 L1120.0 367.6 L1120.5 368.1 L1121.0 369.7 L1121.5 368.8 L1122.0 369.5 L1122.5 369.5 L1123.0 369.4 L1123.5 369.5 L1124.0 367.5 L1124.5 368.6 L1125.0 362.6 L1125.5 369.2 L1126.0 363.1 L1126.5 369.0 L1127.0 369.0 L1127.5 369.6 L1128.0 368.2 L1128.5 368.5 L1129.0 365.6 L1129.5 367.1 L1130.0 365.6 L1130.5 363.2 L1131.0 368.2 L1131.5 368.1 L1132.0 368.3 L1132.5 368.1 L1133.0 361.3 L1133.5 366.4 L1134.0 368.9 L1134.5 368.3 L1135.0 369.1 L1135.5 363.6 L1136.0 362.7 L1136.5 365.5 L1137.0 366.0 L1137.5 368.6 L1138.0 369.4 L1138.5 363.4 L1139.0 366.5 L1139.5 368.9 L1140.0 364.9 L1140.5 365.2 L1141.0 367.1 L1141.5 365.6 L1142.0 366.1 L1142.5 368.9 L1143.0 368.8 L1143.5 367.5 L1144.0 367.1 L1144.5 368.9 L1145.0 362.3 L1145.5 367.1 L1146.0 363.9 L1146.5 369.0 L1147.0 367.6 L1147.5 363.7 L1148.0 363.1 L1148.5 368.1 L1149.0 363.8 L1149.5 369.0 L1150.0 369.1 L1150.5 364.0 L1151.0 367.6 L1151.5 367.9 L1152.0 365.3 L1152.5 367.3 L1153.0 364.5 L1153.5 365.4 L1154.0 367.0 L1154.5 368.1 L1155.0 368.0 L1155.5 368.8 L1156.0 369.1 L1156.5 365.0 L1157.0 368.3 L1157.5 363.5 L1158.0 365.8 L1158.5 368.8 L1159.0 364.0 L1159.5 368.0 L1160.0 367.5 L1160.5 365.0 L1161.0 367.7 L1161.5 363.8 L1162.0 367.9 L1162.5 362.2 L1163.0 361.5 L1163.5 367.9 L1164.0 368.1 L1164.5 364.4 L1165.0 366.8 L1165.5 362.5 L1166.0 368.9 L1166.5 367.2 L1167.0 363.2 L1167.5 367.0 L1168.0 367.2 L1168.5 366.6 L1169.0 365.1 L1169.5 367.3 L1170.0 364.9 L1170.5 363.8 L1171.0 368.4 L1171.5 368.4 L1172.0 368.3 L1172.5 363.8 L1173.0 368.3 L1173.5 364.2 L1174.0 368.2 L1174.5 366.8 L1175.0 360.2 L1175.5 362.0 L1176.0 367.2 L1176.5 368.0 L1177.0 367.4 L1177.5 367.1 L1178.0 362.0 L1178.5 365.8 L1179.0 367.8 L1179.5 361.7 L1180.0 361.8 L1180.5 367.3 L1181.0 365.3 L1181.5 365.9 L1182.0 364.8 L1182.5 362.4 L1183.0 360.7 L1183.5 367.4 L1184.0 365.1 L1184.5 364.8 L1185.0 366.7 L1185.5 366.6 L1186.0 362.0 L1186.5 365.5 L1187.0 365.5 L1187.5 367.0 L1188.0 363.8 L1188.5 361.0 L1189.0 364.1 L1189.5 360.1 L1190.0 361.7 L1190.5 363.2 L1191.0 366.1 L1191.5 361.1 L1192.0 359.9 L1192.5 366.6 L1193.0 361.7 L1193.5 365.2 L1194.0 366.0 L1194.5 362.7 L1195.0 366.4 L1195.5 366.4 L1196.0 365.7 L1196.5 363.6 L1197.0 363.7 L1197.5 359.6 L1198.0 360.5 L1198.5 361.0 L1199.0 364.9 L1199.5 364.9 L1200.0 365.6 L1200.0 385.4 L1199.5 386.2 L1199.0 382.9 L1198.5 390.6 L1198.0 383.0 L1197.5 383.6 L1197.0 382.9 L1196.5 383.5 L1196.0 383.1 L1195.5 388.2 L1195.0 386.4 L1194.5 382.7 L1194.0 389.1 L1193.5 385.9 L1193.0 389.6 L1192.5 382.4 L1192.0 382.7 L1191.5 382.4 L1191.0 382.6 L1190.5 385.8 L1190.0 384.1 L1189.5 384.6 L1189.0 382.3 L1188.5 382.1 L1188.0 382.0 L1187.5 383.4 L1187.0 388.1 L1186.5 388.8 L1186.0 384.6 L1185.5 385.8 L1185.0 386.8 L1184.5 382.5 L1184.0 383.0 L1183.5 382.4 L1183.0 384.0 L1182.5 381.8 L1182.0 382.5 L1181.5 383.3 L1181.0 382.5 L1180.5 381.4 L1180.0 381.8 L1179.5 386.4 L1179.0 381.9 L1178.5 382.6 L1178.0 383.6 L1177.5 381.6 L1177.0 381.6 L1176.5 388.8 L1176.0 383.1 L1175.5 381.1 L1175.0 386.2 L1174.5 383.5 L1174.0 384.6 L1173.5 382.6 L1173.0 384.4 L1172.5 383.2 L1172.0 380.7 L1171.5 385.9 L1171.0 380.9 L1170.5 385.2 L1170.0 382.9 L1169.5 380.4 L1169.0 384.7 L1168.5 385.7 L1168.0 382.2 L1167.5 386.6 L1167.0 381.5 L1166.5 381.8 L1166.0 382.9 L1165.5 384.6 L1165.0 382.0 L1164.5 381.1 L1164.0 380.0 L1163.5 383.5 L1163.0 384.0 L1162.5 380.3 L1162.0 382.6 L1161.5 380.9 L1161.0 383.3 L1160.5 380.6 L1160.0 381.0 L1159.5 379.9 L1159.0 383.0 L1158.5 381.3 L1158.0 385.8 L1157.5 380.0 L1157.0 380.3 L1156.5 380.5 L1156.0 380.1 L1155.5 382.5 L1155.0 379.8 L1154.5 380.8 L1154.0 380.3 L1153.5 380.9 L1153.0 380.0 L1152.5 385.0 L1152.0 381.4 L1151.5 387.8 L1151.0 379.8 L1150.5 382.0 L1150.0 380.8 L1149.5 380.3 L1149.0 379.9 L1148.5 385.4 L1148.0 379.8 L1147.5 386.2 L1147.0 383.1 L1146.5 385.2 L1146.0 380.2 L1145.5 382.0 L1145.0 382.0 L1144.5 379.8 L1144.0 381.5 L1143.5 383.9 L1143.0 386.4 L1142.5 382.7 L1142.0 382.1 L1141.5 380.5 L1141.0 382.7 L1140.5 380.9 L1140.0 380.8 L1139.5 382.9 L1139.0 387.7 L1138.5 381.7 L1138.0 384.2 L1137.5 387.3 L1137.0 382.0 L1136.5 380.4 L1136.0 379.6 L1135.5 384.6 L1135.0 379.6 L1134.5 380.0 L1134.0 382.6 L1133.5 386.6 L1133.0 379.5 L1132.5 379.7 L1132.0 380.7 L1131.5 387.3 L1131.0 380.3 L1130.5 383.7 L1130.0 387.4 L1129.5 381.9 L1129.0 383.0 L1128.5 379.4 L1128.0 382.0 L1127.5 381.6 L1127.0 379.5 L1126.5 379.7 L1126.0 383.8 L1125.5 387.2 L1125.0 380.4 L1124.5 381.4 L1124.0 379.5 L1123.5 383.9 L1123.0 383.3 L1122.5 380.9 L1122.0 381.3 L1121.5 385.8 L1121.0 387.5 L1120.5 379.4 L1120.0 379.8 L1119.5 379.3 L1119.0 384.5 L1118.5 379.3 L1118.0 385.8 L1117.5 386.3 L1117.0 379.3 L1116.5 379.5 L1116.0 383.8 L1115.5 386.2 L1115.0 387.2 L1114.5 379.2 L1114.0 387.5 L1113.5 379.5 L1113.0 384.3 L1112.5 385.8 L1112.0 385.7 L1111.5 380.9 L1111.0 383.1 L1110.5 385.8 L1110.0 380.1 L1109.5 384.9 L1109.0 379.7 L1108.5 385.4 L1108.0 381.9 L1107.5 387.5 L1107.0 382.6 L1106.5 379.4 L1106.0 380.7 L1105.5 379.6 L1105.0 382.4 L1104.5 386.2 L1104.0 381.8 L1103.5 385.4 L1103.0 382.6 L1102.5 383.6 L1102.0 386.0 L1101.5 380.8 L1101.0 380.0 L1100.5 381.1 L1100.0 379.5 L1099.5 379.0 L1099.0 386.2 L1098.5 379.3 L1098.0 380.2 L1097.5 379.3 L1097.0 381.2 L1096.5 379.2 L1096.0 379.1 L1095.5 379.5 L1095.0 380.2 L1094.5 382.7 L1094.0 379.1 L1093.5 386.6 L1093.0 379.8 L1092.5 387.2 L1092.0 379.9 L1091.5 384.1 L1091.0 379.7 L1090.5 380.1 L1090.0 382.8 L1089.5 382.1 L1089.0 380.7 L1088.5 379.2 L1088.0 379.3 L1087.5 379.2 L1087.0 383.6 L1086.5 379.2 L1086.0 381.9 L1085.5 379.2 L1085.0 379.8 L1084.5 381.3 L1084.0 382.5 L1083.5 380.7 L1083.0 380.2 L1082.5 380.6 L1082.0 384.0 L1081.5 379.6 L1081.0 382.7 L1080.5 381.7 L1080.0 379.4 L1079.5 385.8 L1079.0 379.3 L1078.5 387.2 L1078.0 379.6 L1077.5 385.6 L1077.0 379.6 L1076.5 379.7 L1076.0 379.9 L1075.5 379.3 L1075.0 380.0 L1074.5 381.3 L1074.0 385.8 L1073.5 384.5 L1073.0 387.6 L1072.5 379.6 L1072.0 382.3 L1071.5 380.4 L1071.0 382.0 L1070.5 380.2 L1070.0 379.4 L1069.5 380.2 L1069.0 381.1 L1068.5 385.9 L1068.0 379.6 L1067.5 379.9 L1067.0 380.6 L1066.5 387.8 L1066.0 380.4 L1065.5 380.9 L1065.0 380.5 L1064.5 381.7 L1064.0 384.4 L1063.5 383.4 L1063.0 386.0 L1062.5 380.2 L1062.0 382.9 L1061.5 384.6 L1061.0 384.6 L1060.5 379.5 L1060.0 387.3 L1059.5 382.3 L1059.0 381.7 L1058.5 380.2 L1058.0 379.7 L1057.5 387.8 L1057.0 379.6 L1056.5 382.4 L1056.0 380.6 L1055.5 382.4 L1055.0 380.7 L1054.5 379.6 L1054.0 386.4 L1053.5 380.5 L1053.0 382.8 L1052.5 380.9 L1052.0 379.9 L1051.5 381.0 L1051.0 385.3 L1050.5 379.7 L1050.0 386.1 L1049.5 379.9 L1049.0 379.7 L1048.5 385.2 L1048.0 382.2 L1047.5 379.9 L1047.0 383.7 L1046.5 382.3 L1046.0 385.2 L1045.5 379.7 L1045.0 382.6 L1044.5 381.4 L1044.0 380.3 L1043.5 387.0 L1043.0 385.2 L1042.5 379.9 L1042.0 379.8 L1041.5 387.4 L1041.0 381.0 L1040.5 385.6 L1040.0 384.8 L1039.5 384.5 L1039.0 386.3 L1038.5 382.5 L1038.0 383.1 L1037.5 381.4 L1037.0 380.6 L1036.5 382.8 L1036.0 381.0 L1035.5 379.9 L1035.0 380.0 L1034.5 382.6 L1034.0 380.1 L1033.5 385.7 L1033.0 384.3 L1032.5 380.0 L1032.0 384.2 L1031.5 386.3 L1031.0 380.0 L1030.5 380.0 L1030.0 382.2 L1029.5 382.7 L1029.0 382.6 L1028.5 380.5 L1028.0 380.0 L1027.5 386.3 L1027.0 382.5 L1026.5 380.3 L1026.0 381.3 L1025.5 382.4 L1025.0 382.9 L1024.5 383.7 L1024.0 381.7 L1023.5 380.3 L1023.0 386.7 L1022.5 380.8 L1022.0 382.0 L1021.5 382.8 L1021.0 383.2 L1020.5 380.1 L1020.0 383.3 L1019.5 388.1 L1019.0 387.1 L1018.5 381.9 L1018.0 380.2 L1017.5 381.1 L1017.0 381.8 L1016.5 380.3 L1016.0 385.9 L1015.5 381.8 L1015.0 381.6 L1014.5 383.9 L1014.0 381.7 L1013.5 386.4 L1013.0 380.2 L1012.5 380.5 L1012.0 380.2 L1011.5 388.2 L1011.0 380.4 L1010.5 380.2 L1010.0 381.0 L1009.5 382.3 L1009.0 387.8 L1008.5 384.5 L1008.0 383.6 L1007.5 380.2 L1007.0 386.1 L1006.5 382.8 L1006.0 381.1 L1005.5 380.5 L1005.0 385.0 L1004.5 385.5 L1004.0 387.6 L1003.5 383.7 L1003.0 381.0 L1002.5 385.4 L1002.0 380.5 L1001.5 380.9 L1001.0 387.8 L1000.5 383.9 L1000.0 380.3 L999.5 380.6 L999.0 382.4 L998.5 383.1 L998.0 384.7 L997.5 385.2 L997.0 380.4 L996.5 380.6 L996.0 382.3 L995.5 380.5 L995.0 384.6 L994.5 381.1 L994.0 380.8 L993.5 381.1 L993.0 386.3 L992.5 382.2 L992.0 384.2 L991.5 385.4 L991.0 386.1 L990.5 383.2 L990.0 387.1 L989.5 381.5 L989.0 382.2 L988.5 381.0 L988.0 384.3 L987.5 380.7 L987.0 380.9 L986.5 381.6 L986.0 381.0 L985.5 384.0 L985.0 383.1 L984.5 386.1 L984.0 380.6 L983.5 380.7 L983.0 382.8 L982.5 384.7 L982.0 382.3 L981.5 386.4 L981.0 384.7 L980.5 382.1 L980.0 380.7 L979.5 386.4 L979.0 381.9 L978.5 380.7 L978.0 387.7 L977.5 386.0 L977.0 381.1 L976.5 383.8 L976.0 380.7 L975.5 385.8 L975.0 380.7 L974.5 384.7 L974.0 381.2 L973.5 383.4 L973.0 381.0 L972.5 381.5 L972.0 381.9 L971.5 381.0 L971.0 380.7 L970.5 385.0 L970.0 387.8 L969.5 381.0 L969.0 381.8 L968.5 381.3 L968.0 384.5 L967.5 381.8 L967.0 384.7 L966.5 381.4 L966.0 387.1 L965.5 385.9 L965.0 382.2 L964.5 385.2 L964.0 381.2 L963.5 380.9 L963.0 383.0 L962.5 383.5 L962.0 384.6 L961.5 387.0 L961.0 380.9 L960.5 381.7 L960.0 384.5 L959.5 385.9 L959.0 383.4 L958.5 381.0 L958.0 381.3 L957.5 381.4 L957.0 383.8 L956.5 381.5 L956.0 381.1 L955.5 381.4 L955.0 388.6 L954.5 388.7 L954.0 385.4 L953.5 381.2 L953.0 386.9 L952.5 381.1 L952.0 381.6 L951.5 385.2 L951.0 382.0 L950.5 381.0 L950.0 381.7 L949.5 381.5 L949.0 386.8 L948.5 381.1 L948.0 382.3 L947.5 381.1 L947.0 381.7 L946.5 381.3 L946.0 381.3 L945.5 386.4 L945.0 387.6 L944.5 381.5 L944.0 382.4 L943.5 388.7 L943.0 388.9 L942.5 381.9 L942.0 388.0 L941.5 387.3 L941.0 381.1 L940.5 384.4 L940.0 388.9 L939.5 387.8 L939.0 382.4 L938.5 382.2 L938.0 388.1 L937.5 381.7 L937.0 382.2 L936.5 382.0 L936.0 381.1 L935.5 386.7 L935.0 386.9 L934.5 381.4 L934.0 381.3 L933.5 381.4 L933.0 382.6 L932.5 389.6 L932.0 384.7 L931.5 383.8 L931.0 381.5 L930.5 384.1 L930.0 382.0 L929.5 385.3 L929.0 386.5 L928.5 381.2 L928.0 389.6 L927.5 384.3 L927.0 381.5 L926.5 383.4 L926.0 382.0 L925.5 382.8 L925.0 389.6 L924.5 385.3 L924.0 381.4 L923.5 387.1 L923.0 382.1 L922.5 386.9 L922.0 382.3 L921.5 384.6 L921.0 383.3 L920.5 387.9 L920.0 384.0 L919.5 382.5 L919.0 383.7 L918.5 389.0 L918.0 384.3 L917.5 382.6 L917.0 383.6 L916.5 389.8 L916.0 386.4 L915.5 383.5 L915.0 381.4 L914.5 388.4 L914.0 381.7 L913.5 387.3 L913.0 382.3 L912.5 381.5 L912.0 384.2 L911.5 382.2 L911.0 383.1 L910.5 387.5 L910.0 382.3 L909.5 384.0 L909.0 382.2 L908.5 383.2 L908.0 382.7 L907.5 387.9 L907.0 382.9 L906.5 389.3 L906.0 384.4 L905.5 381.5 L905.0 381.6 L904.5 385.7 L904.0 383.4 L903.5 386.2 L903.0 383.8 L902.5 387.6 L902.0 385.4 L901.5 382.5 L901.0 386.1 L900.5 381.9 L900.0 386.1 L899.5 382.8 L899.0 383.2 L898.5 381.6 L898.0 386.6 L897.5 389.8 L897.0 383.6 L896.5 382.0 L896.0 382.6 L895.5 384.5 L895.0 383.8 L894.5 382.1 L894.0 383.4 L893.5 384.1 L893.0 385.9 L892.5 385.2 L892.0 384.8 L891.5 384.1 L891.0 382.1 L890.5 383.0 L890.0 381.8 L889.5 381.8 L889.0 383.5 L888.5 383.9 L888.0 384.6 L887.5 385.2 L887.0 382.4 L886.5 383.3 L886.0 382.2 L885.5 388.9 L885.0 382.3 L884.5 382.3 L884.0 381.7 L883.5 388.3 L883.0 385.1 L882.5 386.8 L882.0 381.9 L881.5 383.9 L881.0 381.8 L880.5 382.8 L880.0 383.2 L879.5 389.1 L879.0 384.0 L878.5 387.8 L878.0 388.8 L877.5 389.9 L877.0 382.7 L876.5 382.7 L876.0 389.3 L875.5 384.1 L875.0 383.3 L874.5 389.3 L874.0 382.0 L873.5 384.6 L873.0 388.1 L872.5 382.0 L872.0 381.9 L871.5 383.9 L871.0 381.9 L870.5 386.2 L870.0 381.9 L869.5 384.2 L869.0 384.9 L868.5 382.2 L868.0 381.9 L867.5 387.5 L867.0 381.9 L866.5 382.3 L866.0 381.9 L865.5 384.3 L865.0 384.0 L864.5 388.4 L864.0 386.7 L863.5 386.2 L863.0 388.3 L862.5 386.2 L862.0 384.2 L861.5 384.2 L861.0 384.9 L860.5 382.1 L860.0 387.8 L859.5 382.5 L859.0 383.9 L858.5 381.9 L858.0 388.3 L857.5 382.9 L857.0 382.0 L856.5 383.4 L856.0 382.0 L855.5 384.9 L855.0 386.2 L854.5 382.3 L854.0 384.1 L853.5 382.1 L853.0 382.3Z" fill="#7888a2"/></svg>
<div class="a" style="left:478px;top:281px;width:317px;height:38px;background:#8a8a8a;"></div>
<div class="t" style="left:495.00px;top:292.75px;font-size:14.84px;color:#3a3a3a;font-weight:normal;transform:scaleX(0.9385);-webkit-text-stroke:0.25px #8a8a8a;">EDIT</div>
<div class="t" style="left:561.00px;top:292.75px;font-size:14.84px;color:#3a3a3a;font-weight:normal;transform:scaleX(0.9111);-webkit-text-stroke:0.25px #8a8a8a;">REPEAT</div>
<div class="t" style="left:650.00px;top:292.75px;font-size:14.84px;color:#3a3a3a;font-weight:normal;transform:scaleX(1.0000);transform:scaleX(0.89)-webkit-text-stroke:0.25px #8a8a8a;">COPY</div>
<div class="t" style="left:723.00px;top:292.75px;font-size:14.84px;color:#3a3a3a;font-weight:normal;transform:scaleX(0.9276);-webkit-text-stroke:0.25px #8a8a8a;">DELETE</div>
<div class="a" style="left:544px;top:291px;width:1.5px;height:18px;background:#3a3a3a;"></div>
<div class="a" style="left:633px;top:291px;width:1.5px;height:18px;background:#3a3a3a;"></div>
<div class="a" style="left:708px;top:291px;width:1.5px;height:18px;background:#3a3a3a;"></div>
<div class="a" style="left:673.6px;top:166px;width:1.2px;height:283px;background:rgba(255,255,255,0.85);"></div>
<svg class="a" style="left:670px;top:155px" width="9" height="12"><path d="M1.5 0.8 L6.5 0.8 Q7.7 0.8 7.7 2 L7.7 8.5 L4 11.5 L0.3 8.5 L0.3 2 Q0.3 0.8 1.5 0.8Z" fill="#fff"/></svg>
<div class="a" style="left:384px;top:66px;width:1px;height:451px;background:#1e1e1e;"></div>
<div class="a" style="left:385px;top:517px;width:815px;height:35px;background:#252525;"></div>
<div class="a" style="left:385px;top:551px;width:815px;height:1px;background:#1f1f1f;"></div>
<div class="t" style="left:399.00px;top:524.46px;font-size:20.55px;color:#36ade6;font-weight:normal;transform:scaleX(1.0430);-webkit-text-stroke:0.35px #252525;">-2 dB</div>
<svg class="a" style="left:975px;top:522px" width="24" height="22" viewBox="0 0 24 22"><path d="M5 5.5 L16 9 L12 11 L17 16 L15.5 17.5 L10.5 12.5 L8.5 16.5Z" fill="#999"/></svg>
<div class="a" style="left:1039px;top:525px;width:17px;height:17px;background:transparent;border:1.5px dashed #999"></div>
<svg class="a" style="left:1098px;top:521px" width="24" height="24" viewBox="0 0 24 24"><line x1="11.6" y1="6" x2="11.6" y2="18.6" stroke="#999" stroke-width="1.5"/><line x1="11.6" y1="6.3" x2="20" y2="6.3" stroke="#999" stroke-width="1.5"/><line x1="3" y1="18.6" x2="11.6" y2="18.6" stroke="#999" stroke-width="1.5"/><circle cx="11.6" cy="6.3" r="3" fill="#999"/><circle cx="11.6" cy="18.6" r="3" fill="#999"/></svg>
<svg class="a" style="left:1160px;top:521px" width="24" height="24" viewBox="0 0 24 24"><line x1="6.7" y1="18.6" x2="17" y2="7.3" stroke="#999" stroke-width="1.5"/><circle cx="6.7" cy="18.6" r="3" fill="#999"/><circle cx="17" cy="7.3" r="3" fill="#999"/></svg>
<div class="a" style="left:384px;top:552px;width:816px;height:282px;background:#212121;"></div>
<svg class="a" style="left:0;top:0" width="1200" height="900"><path d="M384 712 L656 712 L656 740 L675 740 L675 656 L722 656 L722 777.5 L787 777.5 L787 600 L919 600 L919 693.5 L1201 693.5 L1201 834 L384 834Z" fill="#203b48"/>
<line x1="477.5" y1="552" x2="477.5" y2="834" stroke="rgba(255,255,255,0.07)" stroke-width="1"/>
<line x1="571.5" y1="552" x2="571.5" y2="834" stroke="rgba(255,255,255,0.07)" stroke-width="1"/>
<line x1="665.5" y1="552" x2="665.5" y2="834" stroke="rgba(255,255,255,0.07)" stroke-width="1"/>
<line x1="758.5" y1="552" x2="758.5" y2="834" stroke="rgba(255,255,255,0.07)" stroke-width="1"/>
<line x1="852.5" y1="552" x2="852.5" y2="834" stroke="rgba(255,255,255,0.07)" stroke-width="1"/>
<line x1="946.5" y1="552" x2="946.5" y2="834" stroke="rgba(255,255,255,0.07)" stroke-width="1"/>
<line x1="1040.5" y1="552" x2="1040.5" y2="834" stroke="rgba(255,255,255,0.07)" stroke-width="1"/>
<line x1="1133.5" y1="552" x2="1133.5" y2="834" stroke="rgba(255,255,255,0.07)" stroke-width="1"/>
<path d="M384 712 L656 712 L656 740 L675 740 L675 656 L722 656 L722 777.5 L787 777.5 L787 600 L919 600 L919 693.5 L1201 693.5" fill="none" stroke="#2eaae2" stroke-width="1.25"/></svg>
<div class="a" style="left:384px;top:552px;width:1px;height:282px;background:#1a1a1a;"></div>
<div class="a" style="left:0px;top:834px;width:1200px;height:10px;background:#3a3a3a;"></div>
<div class="a" style="left:0px;top:844px;width:1200px;height:56px;background:#222;"></div>
<div class="t" style="left:101.25px;top:863.55px;font-size:16.17px;color:#a0a0a0;font-weight:normal;transform:scaleX(0.8282);-webkit-text-stroke:0.2px #222;">EFFECTS</div>
<div class="t" style="left:227.40px;top:863.55px;font-size:16.17px;color:#a0a0a0;font-weight:normal;transform:scaleX(0.8796);-webkit-text-stroke:0.2px #222;">MACRO</div>
<div class="a" style="left:195px;top:858px;width:1px;height:27px;background:#444;"></div>
<div class="a" style="left:780px;top:858px;width:1px;height:27px;background:#444;"></div>
<div class="a" style="left:898px;top:858px;width:1px;height:27px;background:#444;"></div>
<div class="a" style="left:1073px;top:858px;width:1px;height:27px;background:#444;"></div>
<svg class="a" style="left:801.5px;top:860px" width="22" height="22"><circle cx="11" cy="11" r="9.4" fill="none" stroke="#727272" stroke-width="1.3"/><path d="M6.3 11 L15.7 11 M11 6.3 L11 15.7" stroke="#727272" stroke-width="1.3"/></svg>
<svg class="a" style="left:921px;top:860px" width="22" height="22"><circle cx="11" cy="11" r="9.4" fill="none" stroke="#727272" stroke-width="1.3"/><path d="M6.3 11 L15.7 11 M11 6.3 L11 15.7" stroke="#727272" stroke-width="1.3"/></svg>
<div class="t" style="left:835.00px;top:863.55px;font-size:16.17px;color:#7a7a7a;font-weight:normal;transform:scaleX(0.9292);-webkit-text-stroke:0.2px #222;">BANK</div>
<div class="t" style="left:955.00px;top:863.55px;font-size:16.17px;color:#7a7a7a;font-weight:normal;transform:scaleX(0.8803);-webkit-text-stroke:0.2px #222;">AUDIO TRACK</div>
<svg class="a" style="left:1090px;top:855px" width="40" height="30"><rect x="7.10" y="16.10" width="2.4" height="7.70" rx="1" fill="#f0f0f0"/><rect x="12.00" y="12.90" width="2.4" height="10.90" rx="1" fill="#f0f0f0"/><rect x="16.90" y="14.10" width="2.4" height="9.70" rx="1" fill="#f0f0f0"/><rect x="21.75" y="9.20" width="2.4" height="14.60" rx="1" fill="#f0f0f0"/><rect x="26.25" y="11.60" width="2.4" height="12.20" rx="1" fill="#f0f0f0"/><rect x="30.90" y="5.10" width="2.4" height="18.70" rx="1" fill="#f0f0f0"/></svg>
<div class="t" style="left:1133.00px;top:863.55px;font-size:16.17px;color:#f4f4f4;font-weight:normal;transform:scaleX(0.8901);-webkit-text-stroke:0.2px #222;">AUTO</div>
<div class="a" style="left:1073px;top:844px;width:117px;height:1.6px;background:#dcdcdc;"></div>
</body></html>
